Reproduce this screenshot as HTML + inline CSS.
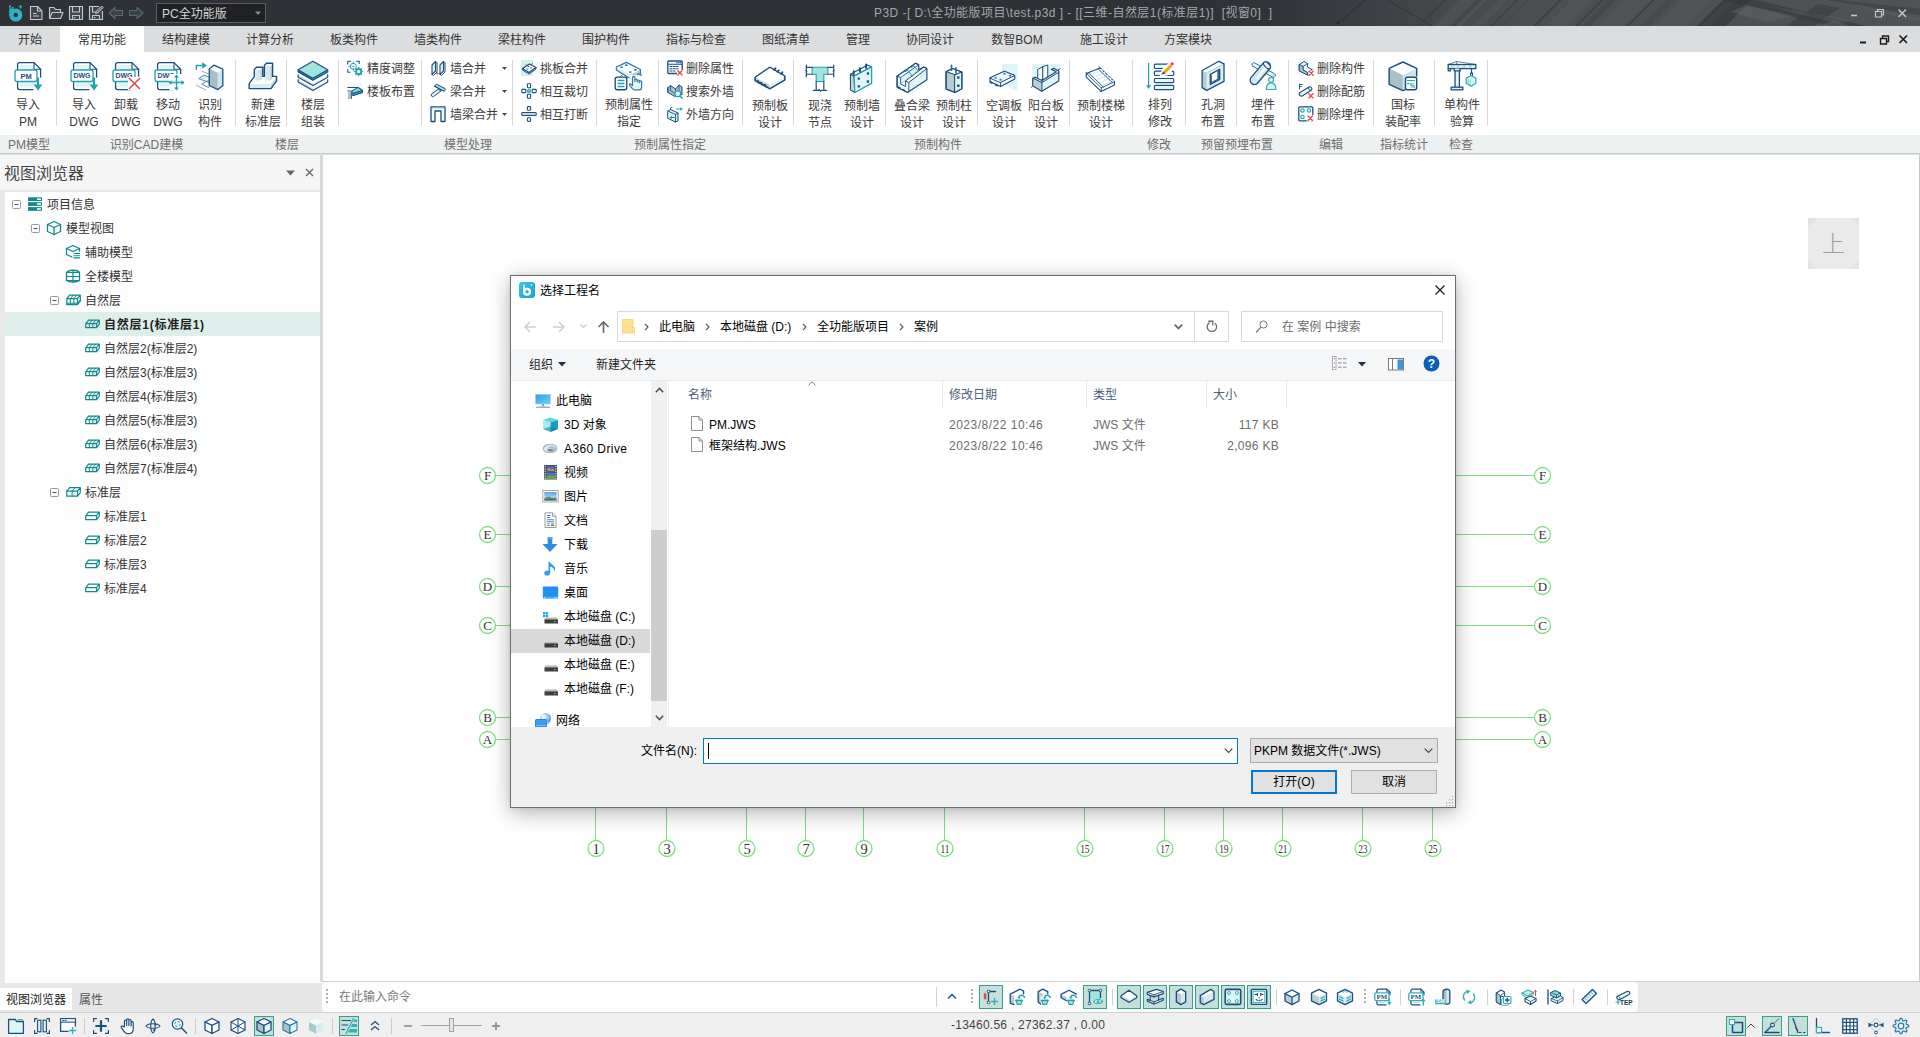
<!DOCTYPE html><html lang="zh"><head><meta charset="utf-8"><title>P3D</title><style>
*{box-sizing:border-box;margin:0;padding:0}
html,body{width:1920px;height:1037px;overflow:hidden;background:#fff}
body{position:relative;font-family:"Liberation Sans","Noto Sans CJK SC",sans-serif;font-size:12px;color:#3b3b3b;line-height:1}
.a{position:absolute}
.t{position:absolute;white-space:nowrap;line-height:16px;height:16px}
.c{text-align:center}
svg{position:absolute;overflow:visible}
.sep{position:absolute;width:1px;background:#d9d9d9}
</style></head><body>
<svg width="0" height="0" style="position:absolute"><defs><linearGradient id="gpc" x1="0" y1="0" x2="1" y2="1"><stop offset="0" stop-color="#2f9cec"/><stop offset="1" stop-color="#6fd0f7"/></linearGradient><linearGradient id="gdrv" x1="0" y1="0" x2="0" y2="1"><stop offset="0" stop-color="#e8e8e8"/><stop offset="1" stop-color="#b8b8b8"/></linearGradient><linearGradient id="gsky" x1="0" y1="0" x2="0" y2="1"><stop offset="0" stop-color="#5aa5e6"/><stop offset="1" stop-color="#d9ecfa"/></linearGradient><radialGradient id="gglobe" cx="0.35" cy="0.35" r="0.8"><stop offset="0" stop-color="#ffffff"/><stop offset="0.5" stop-color="#8cc8f0"/><stop offset="1" stop-color="#2a7fd0"/></radialGradient><linearGradient id="glogo" x1="0" y1="0" x2="1" y2="1"><stop offset="0" stop-color="#35c9e6"/><stop offset="1" stop-color="#1a9fd0"/></linearGradient></defs></svg>
<div class="a" style="left:0px;top:0px;width:1920px;height:26px;background:#2e3237"></div>
<svg style="left:1150px;top:0px;" width="770" height="26" viewBox="0 0 770 26"><defs><linearGradient id="tg" x1="0" x2="1" y1="0" y2="0"><stop offset="0" stop-color="#4a4d50" stop-opacity="0"/><stop offset="0.16" stop-color="#4a4d50" stop-opacity="0.08"/><stop offset="0.34" stop-color="#4a4d50" stop-opacity="0.7"/><stop offset="0.48" stop-color="#4b4e51" stop-opacity="1"/><stop offset="1" stop-color="#505356" stop-opacity="1"/></linearGradient><clipPath id="tc"><rect x="0" y="0" width="770" height="26"/></clipPath></defs><g clip-path="url(#tc)"><rect x="0" y="0" width="770" height="26" fill="url(#tg)"/><path d="M190 22L215 0" stroke="#24272a" stroke-width="0.8" opacity="0.8"/><path d="M237 0L282 26" stroke="#2a2d30" stroke-width="0.8" opacity="0.7"/><circle cx="188" cy="22.5" r="1.5" fill="#24272a"/><path d="M283 26L309 0H337L311 26Z" fill="#626568" opacity="0.28"/><path d="M322 26L348 0H358L332 26Z" fill="#626568" opacity="0.2"/><path d="M395 26L421 0H443L417 26Z" fill="#626568" opacity="0.22"/><path d="M447 26L473 0H499L473 26Z" fill="#626568" opacity="0.2"/><path d="M505 26L531 0H561L535 26Z" fill="#626568" opacity="0.18"/><path d="M268 26L294 0H296L270 26Z" fill="#34373b" opacity="0.5"/><path d="M300 26L326 0H332L306 26Z" fill="#34373b" opacity="0.4"/><path d="M340 26L366 0H369L343 26Z" fill="#34373b" opacity="0.5"/><path d="M352 26L378 0H380L354 26Z" fill="#34373b" opacity="0.35"/><path d="M383 26L409 0H412L386 26Z" fill="#34373b" opacity="0.55"/><path d="M425 26L451 0H454L428 26Z" fill="#34373b" opacity="0.55"/><path d="M432 26L458 0H466L440 26Z" fill="#34373b" opacity="0.3"/><path d="M476 26L502 0H505L479 26Z" fill="#34373b" opacity="0.55"/><path d="M490 26L516 0H526L500 26Z" fill="#34373b" opacity="0.25"/><path d="M547 26L573 0H577L551 26Z" fill="#34373b" opacity="0.55"/><path d="M560 26L586 0H602L576 26Z" fill="#34373b" opacity="0.35"/><path d="M572 0L682 26H716L606 0Z" fill="#34373b" opacity="0.6"/><path d="M548 26L574 0H600L576 26Z" fill="#34373b" opacity="0.55"/><path d="M636 26L668 4L690 8L664 26Z" fill="#34373b" opacity="0.5"/><path d="M690 0L770 9V15L676 0Z" fill="#34373b" opacity="0.5"/><path d="M596 5L644 16L618 22L580 12Z" fill="#626568" opacity="0.45"/><path d="M620 6L700 20L690 24L640 12Z" fill="#626568" opacity="0.35"/><path d="M684 20L700 26H670Z" fill="#626568" opacity="0.4"/><path d="M700 3L770 18V22L720 10Z" fill="#626568" opacity="0.25"/></g></svg>
<svg style="left:6px;top:3px;" width="18" height="20" viewBox="0 0 18 20"><circle cx="9.8" cy="12" r="4.4" fill="none" stroke="#29b4c4" stroke-width="4.3"/><rect x="3.3" y="5.5" width="4" height="7" fill="#29b4c4"/><rect x="3" y="2.5" width="2" height="1.5" fill="#29b4c4"/><rect x="5.5" y="4" width="2" height="1.6" fill="#29b4c4"/><rect x="3.2" y="4.2" width="1.3" height="1.3" fill="#29b4c4"/><path d="M14.5 2v3.4M12.8 3.7h3.4" stroke="#29b4c4" stroke-width="1.1"/></svg>
<svg style="left:28px;top:5px;" width="16" height="16" viewBox="0 0 16 16"><path d="M2.5 1.5H9.5L14 6V14.5H2.5Z" fill="#3b4550" stroke="#c6cacd" stroke-width="1.1" stroke-linejoin="round"/><path d="M9.5 1.5V6H14" fill="none" stroke="#c6cacd" stroke-width="1.1" stroke-linejoin="round"/><path d="M5 8.5h3.5M5 11h6" fill="none" stroke="#c6cacd" stroke-width="1.1" stroke-linejoin="round"/></svg>
<svg style="left:48px;top:5px;" width="16" height="16" viewBox="0 0 16 16"><path d="M1.5 13.5V2.5H6L7.5 4.5H12.5V7.5" fill="#3b4550" stroke="#c6cacd" stroke-width="1.1" stroke-linejoin="round"/><path d="M1.5 13.5L4.2 7.5H15L12.5 13.5Z" fill="#3b4550" stroke="#c6cacd" stroke-width="1.1" stroke-linejoin="round"/></svg>
<svg style="left:68px;top:5px;" width="16" height="16" viewBox="0 0 16 16"><path d="M1.5 1.5H14.5V14.5H1.5Z" fill="#3b4550" stroke="#c6cacd" stroke-width="1.1" stroke-linejoin="round"/><path d="M4.5 1.5V7H11.5V1.5" fill="none" stroke="#c6cacd" stroke-width="1.1" stroke-linejoin="round"/><path d="M4.5 14.5V10.5H11.5V14.5" fill="none" stroke="#c6cacd" stroke-width="1.1" stroke-linejoin="round"/><path d="M6 12.6h1.4" fill="none" stroke="#c6cacd" stroke-width="1.3" stroke-linejoin="round"/></svg>
<svg style="left:88px;top:5px;" width="16" height="16" viewBox="0 0 16 16"><path d="M11 1.5H1.5V14.5H14.5V6" fill="#3b4550" stroke="#c6cacd" stroke-width="1.1" stroke-linejoin="round"/><path d="M4.5 1.5V7H8.5" fill="none" stroke="#c6cacd" stroke-width="1.1" stroke-linejoin="round"/><path d="M4.5 14.5V10.5H11.5V14.5" fill="none" stroke="#c6cacd" stroke-width="1.1" stroke-linejoin="round"/><path d="M6 12.6h1.4" fill="none" stroke="#c6cacd" stroke-width="1.3" stroke-linejoin="round"/><path d="M7.5 8.5L8.3 6.3L13.6 1L15.2 2.6L9.9 7.9Z" fill="#6d757c" stroke="#c6cacd" stroke-width="0.9" stroke-linejoin="round"/></svg>
<svg style="left:108px;top:5px;" width="16" height="16" viewBox="0 0 16 16"><path d="M1 8L7 2.5V5.5H14.5V10.5H7V13.5Z" fill="#394149" stroke="#5f676e" stroke-width="1.1" stroke-linejoin="round"/></svg>
<svg style="left:128px;top:5px;" width="16" height="16" viewBox="0 0 16 16"><path d="M15 8L9 2.5V5.5H1.5V10.5H9V13.5Z" fill="#394149" stroke="#5f676e" stroke-width="1.1" stroke-linejoin="round"/></svg>
<div class="a" style="left:156px;top:3px;width:110px;height:20px;background:#1f2124;border:1px solid #5b5f64"></div>
<div class="t" style="left:162px;top:6px;color:#d4d4d4;font-size:12px">PC全功能版</div>
<svg style="left:254px;top:10px;" width="8" height="6" viewBox="0 0 8 6"><path d="M1 1.5h6l-3 3.5z" fill="#8a8d90"/></svg>
<div class="t" style="left:874px;top:5px;color:#a3a6a9;font-size:12px;letter-spacing:0.45px">P3D -[ D:\全功能版项目\test.p3d ] - [[三维-自然层1(标准层1)]&nbsp; [视窗0]&nbsp; ]</div>
<svg style="left:1846px;top:5px;" width="70" height="16" viewBox="0 0 70 16"><path d="M5 10.5h6" stroke="#c4c6c8" stroke-width="1.6"/><path d="M29.5 6.5h6v5.5h-6z M31.5 6.5v-2h6v5.5h-2" fill="none" stroke="#c4c6c8" stroke-width="1.2"/><path d="M52.5 4.5l7.5 7.5M60 4.5l-7.5 7.5" stroke="#c4c6c8" stroke-width="1.5"/></svg>
<div class="a" style="left:0px;top:26px;width:1920px;height:26px;background:#dcdddf"></div>
<div class="a" style="left:60px;top:26px;width:84px;height:26px;background:#fff"></div>
<div class="t" style="left:-20px;top:32px;width:100px;text-align:center;color:#333">开始</div>
<div class="t" style="left:52px;top:32px;width:100px;text-align:center;color:#333">常用功能</div>
<div class="t" style="left:136px;top:32px;width:100px;text-align:center;color:#333">结构建模</div>
<div class="t" style="left:220px;top:32px;width:100px;text-align:center;color:#333">计算分析</div>
<div class="t" style="left:304px;top:32px;width:100px;text-align:center;color:#333">板类构件</div>
<div class="t" style="left:388px;top:32px;width:100px;text-align:center;color:#333">墙类构件</div>
<div class="t" style="left:472px;top:32px;width:100px;text-align:center;color:#333">梁柱构件</div>
<div class="t" style="left:556px;top:32px;width:100px;text-align:center;color:#333">围护构件</div>
<div class="t" style="left:646px;top:32px;width:100px;text-align:center;color:#333">指标与检查</div>
<div class="t" style="left:736px;top:32px;width:100px;text-align:center;color:#333">图纸清单</div>
<div class="t" style="left:808px;top:32px;width:100px;text-align:center;color:#333">管理</div>
<div class="t" style="left:880px;top:32px;width:100px;text-align:center;color:#333">协同设计</div>
<div class="t" style="left:967px;top:32px;width:100px;text-align:center;color:#333">数智BOM</div>
<div class="t" style="left:1054px;top:32px;width:100px;text-align:center;color:#333">施工设计</div>
<div class="t" style="left:1138px;top:32px;width:100px;text-align:center;color:#333">方案模块</div>
<svg style="left:1854px;top:31px;" width="62" height="16" viewBox="0 0 62 16"><path d="M6 11.5h6" stroke="#1c1c1c" stroke-width="2"/><path d="M26.5 7.500h6v5.5h-6z M28.5 7.5v-2.5h6v5.500h-2" fill="none" stroke="#1c1c1c" stroke-width="1.4"/><path d="M45.5 4.5l7.5 7.500M53 4.500l-7.500 7.500" stroke="#1c1c1c" stroke-width="1.7"/></svg>
<div class="a" style="left:0px;top:52px;width:1920px;height:83px;background:#fff"></div>
<svg style="left:12px;top:60px;" width="32" height="32" viewBox="0 0 32 32"><rect x="8" y="5" width="14" height="22.5" fill="#dff4f5"/><path d="M28.6 17V9.2L22 2.6H7.6a2 2 0 0 0-2 2V27.6a2 2 0 0 0 2 2H21" fill="none" stroke="#1c4f7c" stroke-width="1.3" stroke-linejoin="round" stroke-linecap="round" /><path d="M22 2.6V9.2H28.6" fill="none" stroke="#1c4f7c" stroke-width="1.1" stroke-linejoin="round" stroke-linecap="round" /><rect x="3" y="10" width="22" height="11.5" rx="2" fill="#fff" stroke="#22a2ab" stroke-width="1.3"/><text x="14" y="18.5" text-anchor="middle" font-family="Liberation Sans,sans-serif" font-weight="bold" font-size="7.5" fill="#1c4f7c">PM</text><path d="M26 17.5V26" stroke="#22a2ab" stroke-width="2.2"/><path d="M21.6 24.6H30.4L26 30.6Z" fill="#22a2ab"/></svg>
<div class="t" style="left:-12px;top:97px;width:80px;text-align:center;color:#3b3b3b">导入</div>
<div class="t" style="left:-12px;top:114px;width:80px;text-align:center;color:#3b3b3b">PM</div>
<svg style="left:68px;top:60px;" width="32" height="32" viewBox="0 0 32 32"><rect x="8" y="5" width="14" height="22.5" fill="#dff4f5"/><path d="M28.6 17V9.2L22 2.6H7.6a2 2 0 0 0-2 2V27.6a2 2 0 0 0 2 2H21" fill="none" stroke="#1c4f7c" stroke-width="1.3" stroke-linejoin="round" stroke-linecap="round" /><path d="M22 2.6V9.2H28.6" fill="none" stroke="#1c4f7c" stroke-width="1.1" stroke-linejoin="round" stroke-linecap="round" /><rect x="3" y="10" width="22" height="11.5" rx="2" fill="#fff" stroke="#22a2ab" stroke-width="1.3"/><text x="14" y="18.32" text-anchor="middle" font-family="Liberation Sans,sans-serif" font-weight="bold" font-size="7" fill="#1c4f7c">DWG</text><path d="M26 17.5V26" stroke="#22a2ab" stroke-width="2.2"/><path d="M21.6 24.6H30.4L26 30.6Z" fill="#22a2ab"/></svg>
<div class="t" style="left:44px;top:97px;width:80px;text-align:center;color:#3b3b3b">导入</div>
<div class="t" style="left:44px;top:114px;width:80px;text-align:center;color:#3b3b3b">DWG</div>
<svg style="left:110px;top:60px;" width="32" height="32" viewBox="0 0 32 32"><rect x="8" y="5" width="14" height="22.5" fill="#dff4f5"/><path d="M28.6 16V9.2L22 2.6H7.6a2 2 0 0 0-2 2V27.6a2 2 0 0 0 2 2H21" fill="none" stroke="#1c4f7c" stroke-width="1.3" stroke-linejoin="round" stroke-linecap="round" /><path d="M22 2.6V9.2H28.6" fill="none" stroke="#1c4f7c" stroke-width="1.1" stroke-linejoin="round" stroke-linecap="round" /><rect x="3" y="10" width="22" height="11.5" rx="2" fill="#fff" stroke="#22a2ab" stroke-width="1.3"/><text x="14" y="18.32" text-anchor="middle" font-family="Liberation Sans,sans-serif" font-weight="bold" font-size="7" fill="#1c4f7c">DWG</text><rect x="18" y="17" width="13" height="13" fill="#fff"/><path d="M19.5 18.5l10 10M29.5 18.5l-10 10" stroke="#e8474c" stroke-width="1.6" stroke-linecap="round"/></svg>
<div class="t" style="left:86px;top:97px;width:80px;text-align:center;color:#3b3b3b">卸载</div>
<div class="t" style="left:86px;top:114px;width:80px;text-align:center;color:#3b3b3b">DWG</div>
<svg style="left:152px;top:60px;" width="32" height="32" viewBox="0 0 32 32"><rect x="8" y="5" width="14" height="22.5" fill="#dff4f5"/><path d="M28.6 14V9.2L22 2.6H7.6a2 2 0 0 0-2 2V27.6a2 2 0 0 0 2 2H21" fill="none" stroke="#1c4f7c" stroke-width="1.3" stroke-linejoin="round" stroke-linecap="round" /><path d="M22 2.6V9.2H28.6" fill="none" stroke="#1c4f7c" stroke-width="1.1" stroke-linejoin="round" stroke-linecap="round" /><rect x="3" y="10" width="22" height="11.5" rx="2" fill="#fff" stroke="#22a2ab" stroke-width="1.3"/><text x="14" y="18.32" text-anchor="middle" font-family="Liberation Sans,sans-serif" font-weight="bold" font-size="7" fill="#1c4f7c">DWG</text><rect x="17.5" y="14" width="14" height="16.5" fill="#fff"/><path d="M24.5 15.5v14M17.5 22.5h14" stroke="#22a2ab" stroke-width="1.4"/><path d="M22 17.5l2.5-3 2.5 3zM22 27.5l2.5 3 2.5-3zM19.5 20l-3 2.5 3 2.5zM29.5 20l3 2.5-3 2.5z" fill="#22a2ab"/></svg>
<div class="t" style="left:128px;top:97px;width:80px;text-align:center;color:#3b3b3b">移动</div>
<div class="t" style="left:128px;top:114px;width:80px;text-align:center;color:#3b3b3b">DWG</div>
<svg style="left:194px;top:60px;" width="32" height="32" viewBox="0 0 32 32"><path d="M2.4 9.5V5.45H8" fill="none" stroke="#22a2ab" stroke-width="1.4" stroke-linejoin="round" stroke-linecap="round" /><path d="M8.1 2.2L13 5.45 8.1 8.700Z" fill="#22a2ab"/><path d="M7.600 11.200L14.500 13.900M2.200 25.300L11.800 30" fill="none" stroke="#8fb1cb" stroke-width="1.0" stroke-linejoin="round" stroke-linecap="round" /><path d="M5.100 18.400L9.900 15.100L15.300 17.200V21L12.200 21.300Z" fill="#e3f7f8" stroke="#3d78a3" stroke-width="0.9" stroke-linejoin="round" stroke-linecap="round" /><path d="M8.150 24L12.200 21.300L15.300 22.500V26.500L14.900 27.250Z" fill="#fff" stroke="#3d78a3" stroke-width="0.9" stroke-linejoin="round" stroke-linecap="round" /><path d="M15.300 8.700L19.900 5.200L28.800 9.100L23.800 12.700Z" fill="#fff"/><path d="M15.300 8.700L23.800 12.700V29.600L15.300 25.500Z" fill="#a6bfc4"/><path d="M23.800 12.700L28.800 9.100V25.700L23.800 29.600Z" fill="#c9e6ea"/><path d="M15.300 8.700L19.900 5.200L28.800 9.100V25.700L23.800 29.600L15.300 25.500Z" fill="none" stroke="#1c4f7c" stroke-width="1.3" stroke-linejoin="round" stroke-linecap="round" /></svg>
<div class="t" style="left:170px;top:97px;width:80px;text-align:center;color:#3b3b3b">识别</div>
<div class="t" style="left:170px;top:114px;width:80px;text-align:center;color:#3b3b3b">构件</div>
<svg style="left:247px;top:60px;" width="32" height="32" viewBox="0 0 32 32"><path d="M2.160 24.100H23.960V28.600H2.160Z" fill="#d6ecee"/><path d="M23.960 24.100L29.600 16.600V20.850L23.960 28.600Z" fill="#c3dde1"/><path d="M8.250 10.060H13.200V20.600H8.250Z" fill="#d3eaed"/><path d="M13.200 10.060L14.800 8.500V19L13.200 20.600Z" fill="#b5ced2"/><path d="M18.300 6.100H23.250V20.600H18.300Z" fill="#d3eaed"/><path d="M23.250 6.100L24.900 4.500V19L23.250 20.600Z" fill="#b5ced2"/><path d="M2.160 28.600V23.660L7.300 16.600V9.600L9.400 7.250H15.750V16.400H17.400V5.400L19.500 3.270H25.600V16.400H29.600V20.850L23.960 28.600Z" fill="none" stroke="#1c4f7c" stroke-width="1.4" stroke-linejoin="round" stroke-linecap="round" /></svg>
<div class="t" style="left:223px;top:97px;width:80px;text-align:center;color:#3b3b3b">新建</div>
<div class="t" style="left:223px;top:114px;width:80px;text-align:center;color:#3b3b3b">标准层</div>
<svg style="left:297px;top:60px;" width="32" height="32" viewBox="0 0 32 32"><path d="M1.150 19.7L15.900 28.1V30.5L1.150 22.099999999999998Z" fill="#cfe0e3"/><path d="M30.700 19.7L15.900 28.1V30.5L30.700 22.099999999999998Z" fill="#f4fbfb"/><path d="M1.150 19.7L15.900 11.2L30.700 19.7L15.900 28.1Z" fill="#fff"/><path d="M1.150 19.7V22.099999999999998L15.900 30.5L30.700 22.099999999999998V19.7" fill="none" stroke="#1c4f7c" stroke-width="1.2" stroke-linejoin="round" stroke-linecap="round" /><path d="M1.150 14.75L15.900 23.15V25.549999999999997L1.150 17.15Z" fill="#cfe0e3"/><path d="M30.700 14.75L15.900 23.15V25.549999999999997L30.700 17.15Z" fill="#f4fbfb"/><path d="M1.150 14.75L15.900 6.25L30.700 14.75L15.900 23.15Z" fill="#fff"/><path d="M1.150 14.75V17.15L15.900 25.549999999999997L30.700 17.15V14.75" fill="none" stroke="#1c4f7c" stroke-width="1.2" stroke-linejoin="round" stroke-linecap="round" /><path d="M1.150 9.83L15.900 18.23V20.330000000000002L1.150 11.93Z" fill="#2f75a8"/><path d="M30.700 9.83L15.900 18.23V20.330000000000002L30.700 11.93Z" fill="#2aa9b5"/><path d="M1.150 9.83L15.900 1.33L30.700 9.83L15.900 18.23Z" fill="#a3e3df" stroke="#1c4f7c" stroke-width="1.1" stroke-linejoin="round" stroke-linecap="round" /><path d="M1.150 9.83V11.93L15.900 20.330000000000002L30.700 11.93V9.83" fill="none" stroke="#1c4f7c" stroke-width="1.2" stroke-linejoin="round" stroke-linecap="round" /></svg>
<div class="t" style="left:273px;top:97px;width:80px;text-align:center;color:#3b3b3b">楼层</div>
<div class="t" style="left:273px;top:114px;width:80px;text-align:center;color:#3b3b3b">组装</div>
<svg style="left:613px;top:60px;" width="32" height="32" viewBox="0 0 32 32"><path d="M3.350 7L17.600 14.500L16.100 18L3.350 10.100Z" fill="#d9eef0"/><path d="M17.600 14.500L27.450 9.500V13L22 15.800Z" fill="#b7cdd0"/><path d="M3.350 7L13.400 2.370L27.450 9.500L17.600 14.500Z" fill="#fff"/><path d="M16.100 18L3.350 10.100V7L13.400 2.370L27.450 9.500V13.500" fill="none" stroke="#2f75a8" stroke-width="1.2" stroke-linejoin="round" stroke-linecap="round" /><ellipse cx="8.55" cy="7.2" rx="1.400" ry="0.850" fill="#2f75a8"/><ellipse cx="13.4" cy="5.2" rx="1.400" ry="0.850" fill="#2f75a8"/><ellipse cx="17.4" cy="12" rx="1.400" ry="0.850" fill="#2f75a8"/><ellipse cx="22.4" cy="9.9" rx="1.400" ry="0.850" fill="#2f75a8"/><path d="M24.500 14.800l1.500-1.200 1.200 1.600 1.200-.400" fill="none" stroke="#2f75a8" stroke-width="1.3" stroke-linejoin="round" stroke-linecap="round" /><path d="M9.100 14.900L7.200 17" fill="none" stroke="#2f75a8" stroke-width="1.0" stroke-linejoin="round" stroke-linecap="round" /><rect x="2.200" y="17.100" width="11.560" height="12.660" rx="2.200" fill="#fff" stroke="#0f4c75" stroke-width="1.300"/><path d="M5.100 20.500H10.900M5.100 23.500H10.900M5.100 26.500H10.900" fill="none" stroke="#22a2ab" stroke-width="1.3" stroke-linejoin="round" stroke-linecap="round" /><path d="M19.500 25.500V17.500a1.200 1.200 0 0 1 2.400 0V21.500 20.300a1.150 1.150 0 0 1 2.300 0V22 21.100a1.100 1.100 0 0 1 2.200 0V22.600 22a1.100 1.100 0 0 1 2.200 0V27.500c0 1.400-.9 2.300-2.200 2.300H21.500c-1 0-1.600-.5-2.300-1.400L16.700 25.300c-.7-1 .5-2 1.500-1.200Z" fill="#e3f7f8" stroke="#2f75a8" stroke-width="1.2" stroke-linejoin="round" stroke-linecap="round" /></svg>
<div class="t" style="left:589px;top:97px;width:80px;text-align:center;color:#3b3b3b">预制属性</div>
<div class="t" style="left:589px;top:114px;width:80px;text-align:center;color:#3b3b3b">指定</div>
<svg style="left:754px;top:61px;" width="32" height="32" viewBox="0 0 32 32"><path d="M1.150 16.150L15.900 23.800V27.800L1.150 19.800Z" fill="#bfd3d6"/><path d="M30.800 15.050L15.900 23.800V27.800L30.800 19.060Z" fill="#e3f2f4"/><path d="M1.150 16.150L15.900 6.300L30.800 15.050V19.060L15.900 27.800L1.150 19.800Z" fill="none" stroke="#1c4f7c" stroke-width="1.2" stroke-linejoin="round" stroke-linecap="round" /><path d="M1.150 16.150L15.900 6.300L30.800 15.050L15.900 23.800Z" fill="#fff"/><path d="M1.150 16.150L15.900 6.300L30.800 15.050V19.060L15.900 27.800L1.150 19.800Z" fill="none" stroke="#1c4f7c" stroke-width="1.2" stroke-linejoin="round" stroke-linecap="round" /><path d="M20.300 8.900l1.200-1.600M23.600 10.800l1.200-1.600M27.200 12.900l1.200-1.600" fill="none" stroke="#1c4f7c" stroke-width="1.9" stroke-linejoin="round" stroke-linecap="round" /><path d="M3.600 19.900l1.400 2M7 21.700l1.400 2M10.900 23.700l1.400 2" fill="none" stroke="#1c4f7c" stroke-width="2.0" stroke-linejoin="round" stroke-linecap="round" /></svg>
<div class="t" style="left:730px;top:98px;width:80px;text-align:center;color:#3b3b3b">预制板</div>
<div class="t" style="left:730px;top:115px;width:80px;text-align:center;color:#3b3b3b">设计</div>
<svg style="left:804px;top:61px;" width="32" height="32" viewBox="0 0 32 32"><path d="M8.170 6.300H23.850V13.230H19.830V20.500H12.180V13.230H8.170Z" fill="#a3e3df" stroke="#22a2ab" stroke-width="1.1"/><path d="M2.330 6.300H8.170M2.330 13.230H8.170M23.850 6.300H29.700M23.850 13.230H29.700M2.330 4.100V15.800M29.700 4.100V15.800" fill="none" stroke="#1c4f7c" stroke-width="1.2" stroke-linejoin="round" stroke-linecap="round" /><path d="M2.330 8.800l-.9 .700 1.800 1-.9.700M29.700 8.600l.9.700-1.800 1 .9.700" fill="none" stroke="#1c4f7c" stroke-width="0.9" stroke-linejoin="round" stroke-linecap="round" /><path d="M12.180 20.500V29.300M19.830 20.500V29.300M9.260 29.300H14.500l.8-.800 1 1.800.8-1H22.750" fill="none" stroke="#1c4f7c" stroke-width="1.2" stroke-linejoin="round" stroke-linecap="round" /></svg>
<div class="t" style="left:780px;top:98px;width:80px;text-align:center;color:#3b3b3b">现浇</div>
<div class="t" style="left:780px;top:115px;width:80px;text-align:center;color:#3b3b3b">节点</div>
<svg style="left:846px;top:61px;" width="32" height="32" viewBox="0 0 32 32"><path d="M4.450 13.200L8.100 15.050L8.800 31.460L4.450 28.900Z" fill="#c9d7da" stroke="#1c4f7c" stroke-width="1.1" stroke-linejoin="round" stroke-linecap="round" /><path d="M4.450 13.200L21.600 4.100L25.600 5.940L8.100 15.050Z" fill="#fff" stroke="#1c4f7c" stroke-width="1.1" stroke-linejoin="round" stroke-linecap="round" /><path d="M8.100 15.050L25.600 5.940V22.350L8.800 31.460Z" fill="#e1f6f8" stroke="#22a2ab" stroke-width="1.3" stroke-linejoin="round" stroke-linecap="round" /><path d="M7.700 13.400V10.200M13.900 10.600V7.200M20.100 7.100V3.400" fill="none" stroke="#1c4f7c" stroke-width="1.9" stroke-linejoin="round" stroke-linecap="round" /><rect x="11.65" y="16.450000000000003" width="2.300" height="2.300" rx="0.400" fill="#1c4f7c"/><rect x="20.8" y="11.35" width="2.300" height="2.300" rx="0.400" fill="#1c4f7c"/><rect x="11.65" y="24.150000000000002" width="2.300" height="2.300" rx="0.400" fill="#1c4f7c"/><rect x="20.8" y="19.35" width="2.300" height="2.300" rx="0.400" fill="#1c4f7c"/></svg>
<div class="t" style="left:822px;top:98px;width:80px;text-align:center;color:#3b3b3b">预制墙</div>
<div class="t" style="left:822px;top:115px;width:80px;text-align:center;color:#3b3b3b">设计</div>
<svg style="left:896px;top:61px;" width="32" height="32" viewBox="0 0 32 32"><path d="M1.25 15L19.6 2.25L22.75 3.75V8.75L27.75 6L30.9 7.5V18.75L11.5 31.5L1.25 26.25Z" fill="#dff4f5" stroke="none" stroke-width="0" stroke-linejoin="round" stroke-linecap="round" /><path d="M1.25 15L19.6 2.25L22.75 3.75L4.6 16.5Z" fill="#fff" stroke="#1c4f7c" stroke-width="0.9" stroke-linejoin="round" stroke-linecap="round" /><path d="M9.6 20L27.75 6L30.9 7.5L12.75 21.5Z" fill="#fff" stroke="#1c4f7c" stroke-width="1.0" stroke-linejoin="round" stroke-linecap="round" /><path d="M1.25 15L4.6 16.5V23L9.6 25.6V20L12.75 21.5V31L11.5 31.5L1.25 26.25Z" fill="#f3fafa" stroke="#1c4f7c" stroke-width="0.9" stroke-linejoin="round" stroke-linecap="round" /><path d="M4.6 23L22.75 8.75" fill="none" stroke="#9cc7d6" stroke-width="0.8" stroke-linejoin="round" stroke-linecap="round" /><path d="M9 10.6L12 9.4L16.3 15.2M15.2 6.4L18.2 5.2L22.6 11" fill="none" stroke="#22a2ab" stroke-width="1.0" stroke-linejoin="round" stroke-linecap="round" /><path d="M2.5 26.2l1.5.8M7 28.600l1.500.800" fill="none" stroke="#1c4f7c" stroke-width="1.6" stroke-linejoin="round" stroke-linecap="round" /><path d="M1.25 15L19.6 2.25L22.75 3.75V8.75L27.75 6L30.9 7.5V18.75L11.5 31.5L1.25 26.25Z" fill="none" stroke="#1c4f7c" stroke-width="1.2" stroke-linejoin="round" stroke-linecap="round" /></svg>
<div class="t" style="left:872px;top:98px;width:80px;text-align:center;color:#3b3b3b">叠合梁</div>
<div class="t" style="left:872px;top:115px;width:80px;text-align:center;color:#3b3b3b">设计</div>
<svg style="left:938px;top:61px;" width="32" height="32" viewBox="0 0 32 32"><path d="M8.25 10.6L14.5 7.5L23.9 11L17 13.75Z" fill="#fff" stroke="#1c4f7c" stroke-width="1.0" stroke-linejoin="round" stroke-linecap="round" /><path d="M8.25 10.6L17 13.75V31.5L8.25 28.1Z" fill="#b7cccf" stroke="#1c4f7c" stroke-width="1.0" stroke-linejoin="round" stroke-linecap="round" /><path d="M17 13.75L23.9 11V27.75L17 31.5Z" fill="#dff4f5" stroke="#1c4f7c" stroke-width="1.0" stroke-linejoin="round" stroke-linecap="round" /><path d="M8.25 10.6L14.5 7.5L23.9 11V27.75L17 31.5L8.25 28.1Z" fill="none" stroke="#1c4f7c" stroke-width="1.2" stroke-linejoin="round" stroke-linecap="round" /><path d="M13.5 4.4V9.2M17.9 6.9V11.9" fill="none" stroke="#2a69a3" stroke-width="1.7" stroke-linejoin="round" stroke-linecap="round" /><rect x="19.1" y="15.3" width="2.4" height="2.4" fill="#1c4f7c"/><rect x="19.1" y="23.55" width="2.4" height="2.4" fill="#1c4f7c"/></svg>
<div class="t" style="left:914px;top:98px;width:80px;text-align:center;color:#3b3b3b">预制柱</div>
<div class="t" style="left:914px;top:115px;width:80px;text-align:center;color:#3b3b3b">设计</div>
<svg style="left:988px;top:61px;" width="32" height="32" viewBox="0 0 32 32"><path d="M13.9 3.1H29.75V30.6L13.9 22.5Z" fill="#dff4f5"/><path d="M2 16.9L16.4 10.25L26.75 14.4V18.1L12.6 25.6L2 20.6Z" fill="#fff" stroke="#1c4f7c" stroke-width="1.1" stroke-linejoin="round" stroke-linecap="round" /><path d="M2 16.9L16.4 10.25L26.75 14.4L12.6 21.5Z" fill="#eef9fa" stroke="#1c4f7c" stroke-width="1.0" stroke-linejoin="round" stroke-linecap="round" /><path d="M12.6 21.5V25.6" fill="none" stroke="#1c4f7c" stroke-width="1.0" stroke-linejoin="round" stroke-linecap="round" /><ellipse cx="7.6" cy="16.9" rx="1.3" ry="0.9" fill="#3f7fb0"/><ellipse cx="16.4" cy="12.75" rx="1.3" ry="0.9" fill="#3f7fb0"/><ellipse cx="12.6" cy="18.75" rx="1.3" ry="0.9" fill="#3f7fb0"/><ellipse cx="22" cy="14.75" rx="1.3" ry="0.9" fill="#3f7fb0"/><path d="M2.3 21.200l1.500.700M7.500 23.600l1.800.900" fill="none" stroke="#1c4f7c" stroke-width="1.8" stroke-linejoin="round" stroke-linecap="round" /></svg>
<div class="t" style="left:964px;top:98px;width:80px;text-align:center;color:#3b3b3b">空调板</div>
<div class="t" style="left:964px;top:115px;width:80px;text-align:center;color:#3b3b3b">设计</div>
<svg style="left:1030px;top:61px;" width="32" height="32" viewBox="0 0 32 32"><path d="M2.1 3.1H29.75V13L12 23L2.1 18.500Z" fill="#dff4f5"/><path d="M8.1 8.3L13.1 5.500V19L8.100 19Z" fill="#fff" stroke="#1c4f7c" stroke-width="1.0" stroke-linejoin="round" stroke-linecap="round" /><path d="M13.1 5.500L17.750 4V17L13.100 19Z" fill="#fff" stroke="#1c4f7c" stroke-width="1.0" stroke-linejoin="round" stroke-linecap="round" /><path d="M3.1 17.25L5.2 16.2L12 19.5L26.2 10.8L21.6 8.400L23.800 7.300L28.750 10V20L11.9 30.25L3.1 25Z" fill="#dff4f5" stroke="#1c4f7c" stroke-width="1.2" stroke-linejoin="round" stroke-linecap="round" /><path d="M3.1 17.25L11.9 21.5V30.25L3.1 25Z" fill="#b9cfd3" stroke="#1c4f7c" stroke-width="1.0" stroke-linejoin="round" stroke-linecap="round" /><path d="M11.9 21.5L28.75 11.25M12 19.500V21.400" fill="none" stroke="#1c4f7c" stroke-width="1.0" stroke-linejoin="round" stroke-linecap="round" /><path d="M27.500 9.300L30.300 7.600M2.300 25.600L1.200 26.400" fill="none" stroke="#1c4f7c" stroke-width="0.9" stroke-linejoin="round" stroke-linecap="round" /></svg>
<div class="t" style="left:1006px;top:98px;width:80px;text-align:center;color:#3b3b3b">阳台板</div>
<div class="t" style="left:1006px;top:115px;width:80px;text-align:center;color:#3b3b3b">设计</div>
<svg style="left:1085px;top:61px;" width="32" height="32" viewBox="0 0 32 32"><path d="M1.25 12.5L15 6.9L29.4 20.7V24L16.25 30.6L1.25 16.2Z" fill="#fff" stroke="#1c4f7c" stroke-width="1.1" stroke-linejoin="round" stroke-linecap="round" /><path d="M3.6 13.0L16.6 7.9L18.2 9.5L5.2 14.6Z" fill="#e3f1f3" stroke="none" stroke-width="0" stroke-linejoin="round" stroke-linecap="round" /><path d="M6.5 15.75L19.5 10.65L21.099999999999998 12.25L8.1 17.35Z" fill="#e3f1f3" stroke="none" stroke-width="0" stroke-linejoin="round" stroke-linecap="round" /><path d="M9.4 18.5L22.400000000000002 13.4L24.0 15.0L11.0 20.1Z" fill="#e3f1f3" stroke="none" stroke-width="0" stroke-linejoin="round" stroke-linecap="round" /><path d="M12.299999999999999 21.25L25.3 16.15L26.9 17.75L13.899999999999999 22.85Z" fill="#e3f1f3" stroke="none" stroke-width="0" stroke-linejoin="round" stroke-linecap="round" /><path d="M15.2 24.0L28.200000000000003 18.9L29.799999999999997 20.5L16.8 25.6Z" fill="#e3f1f3" stroke="none" stroke-width="0" stroke-linejoin="round" stroke-linecap="round" /><path d="M1.25 12.5L16.25 26.900V30.600M16.25 26.900L29.400 20.700M3.300 11.700L18.300 26M13 7.700L27.400 21.600" fill="none" stroke="#1c4f7c" stroke-width="0.9" stroke-linejoin="round" stroke-linecap="round" /><path d="M1 11.300l1.800 1.800M14 5.700l1.800 1.800" fill="none" stroke="#1c4f7c" stroke-width="0.9" stroke-linejoin="round" stroke-linecap="round" /></svg>
<div class="t" style="left:1061px;top:98px;width:80px;text-align:center;color:#3b3b3b">预制楼梯</div>
<div class="t" style="left:1061px;top:115px;width:80px;text-align:center;color:#3b3b3b">设计</div>
<svg style="left:1144px;top:60px;" width="32" height="32" viewBox="0 0 32 32"><path d="M4.600 3V25.700" stroke="#22a2ab" stroke-width="1.200"/><path d="M2.100 25.200H7.100L4.600 28.900Z" fill="#22a2ab"/><rect x="10.300" y="4.2" width="19.45" height="4.3" rx="1.300" fill="#e3f8f9" stroke="#1c4f7c" stroke-width="1.200"/><rect x="10.300" y="11.2" width="19.45" height="4.300000000000001" rx="1.300" fill="#e3f8f9" stroke="#1c4f7c" stroke-width="1.200"/><rect x="10.300" y="18.5" width="19.45" height="4.100000000000001" rx="1.300" fill="#e3f8f9" stroke="#1c4f7c" stroke-width="1.200"/><rect x="10.300" y="25.3" width="19.45" height="4.300000000000001" rx="1.300" fill="#e3f8f9" stroke="#1c4f7c" stroke-width="1.200"/><path d="M15.300 16.800L18 9.500L25.500 2L31 2L31 8L23.500 15.500Z" fill="#fff"/><path d="M19.400 11.200L26.500 4.200L28.400 6.150L21.400 13.600Z" fill="#f5a30a"/><path d="M20.300 10.300L27.400 3.300" stroke="#fbc65c" stroke-width="0.800"/><path d="M19.400 11.200L21.400 13.600L17.100 14.750Z" fill="#6b3f2a"/><circle cx="28.200" cy="3.700" r="1.500" fill="#ee3b4a"/></svg>
<div class="t" style="left:1120px;top:97px;width:80px;text-align:center;color:#3b3b3b">排列</div>
<div class="t" style="left:1120px;top:114px;width:80px;text-align:center;color:#3b3b3b">修改</div>
<svg style="left:1197px;top:60px;" width="32" height="32" viewBox="0 0 32 32"><path d="M5.100 10.450L9.800 12.800V30.400L5.100 27.600Z" fill="#b5cbd0"/><path d="M5.100 10.450L21.900 1.300L27 3.800L9.800 12.800Z" fill="#fff"/><path d="M9.800 12.800L27 3.800V21.400L9.800 30.400Z" fill="#d8edf0"/><path d="M9.800 12.800L27 3.800" fill="none" stroke="#9cc7d6" stroke-width="0.8" stroke-linejoin="round" stroke-linecap="round" /><path d="M13.300 14.350L22.700 9.300V19.400L13.300 24.500Z" fill="#fff"/><path d="M20.300 10.600L22.700 9.300V19.400L20.300 20.700Z" fill="#2a69a3"/><path d="M14.250 22.600L20.300 19.400V20.700L13.300 24.500Z" fill="#cfe9ec"/><path d="M13.300 14.350L22.700 9.300V19.400L13.300 24.500Z" fill="none" stroke="#1c4f7c" stroke-width="1.3" stroke-linejoin="round" stroke-linecap="round" /><path d="M14.250 15.200V22.600L20.300 19.400" fill="none" stroke="#1c4f7c" stroke-width="1.0" stroke-linejoin="round" stroke-linecap="round" /><path d="M5.100 10.450L21.900 1.300L27 3.800V21.400L9.800 30.400L5.100 27.600Z" fill="none" stroke="#1c4f7c" stroke-width="1.3" stroke-linejoin="round" stroke-linecap="round" /></svg>
<div class="t" style="left:1173px;top:97px;width:80px;text-align:center;color:#3b3b3b">孔洞</div>
<div class="t" style="left:1173px;top:114px;width:80px;text-align:center;color:#3b3b3b">布置</div>
<svg style="left:1247px;top:60px;" width="32" height="32" viewBox="0 0 32 32"><path d="M5.89 6.27L25.69 17.07A1.9 1.9 0 0 0 27.51 13.73L7.71 2.93A1.9 1.9 0 0 0 5.89 6.27Z" fill="#e9f5f7" stroke="#2f75a8" stroke-width="1.0" stroke-linejoin="round" stroke-linecap="round" /><ellipse cx="27" cy="15.600" rx="1.300" ry="1.800" fill="#b9c9cc" transform="rotate(-28 27 15.600)"/><path d="M15.91 3.43L4.11 17.43A4.3 4.3 0 0 0 10.69 22.97L22.49 8.97A4.3 4.3 0 0 0 15.91 3.43Z" fill="#d2e9ec" stroke="#1c4f7c" stroke-width="1.3" stroke-linejoin="round" stroke-linecap="round" /><path d="M10 18L20.500 5.500" fill="none" stroke="#f2fbfc" stroke-width="2.2" stroke-linejoin="round" stroke-linecap="round" /><path d="M17.200 3L22.300 8.200" fill="none" stroke="#1c4f7c" stroke-width="0.0" stroke-linejoin="round" stroke-linecap="round" /><ellipse cx="20" cy="5.300" rx="4.300" ry="2.200" fill="#fff" stroke="#1c4f7c" stroke-width="1.100" transform="rotate(45 20 5.300)"/><circle cx="24.100" cy="19.800" r="2.500" fill="#dff5f5" stroke="#35a9b3" stroke-width="1.200"/><path d="M19.300 29.500C19.300 25 21 22.800 24.100 22.800S28.900 25 28.900 29.500Z" fill="#dff5f5" stroke="#35a9b3" stroke-width="1.2" stroke-linejoin="round" stroke-linecap="round" /></svg>
<div class="t" style="left:1223px;top:97px;width:80px;text-align:center;color:#3b3b3b">埋件</div>
<div class="t" style="left:1223px;top:114px;width:80px;text-align:center;color:#3b3b3b">布置</div>
<svg style="left:1387px;top:60px;" width="32" height="32" viewBox="0 0 32 32"><path d="M2.170 8.300L15.900 2L29.700 8.300L15.900 15.200Z" fill="#fff"/><path d="M2.170 8.300L15.900 15.200V30.700L2.170 24.400Z" fill="#a9c0c5"/><path d="M15.900 15.200L29.700 8.300V24.400L15.900 30.700Z" fill="#c9e6ea"/><path d="M29.700 16V8.300L15.900 2L2.170 8.300V24.400L15.900 30.700L18 29.800" fill="none" stroke="#1c4f7c" stroke-width="1.4" stroke-linejoin="round" stroke-linecap="round" /><rect x="18.500" y="17.200" width="11.200" height="12.600" rx="2" fill="#fff" stroke="#1c4f7c" stroke-width="1.400"/><path d="M20.500 20.500H27.500" fill="none" stroke="#22a2ab" stroke-width="1.1" stroke-linejoin="round" stroke-linecap="round" /><path d="M20.500 23.600H21.800" fill="none" stroke="#22a2ab" stroke-width="1.1" stroke-linejoin="round" stroke-linecap="round" /><text x="25.300" y="28" text-anchor="middle" font-family="Liberation Sans,sans-serif" font-weight="bold" font-size="6.500" fill="#22a2ab">%</text></svg>
<div class="t" style="left:1363px;top:97px;width:80px;text-align:center;color:#3b3b3b">国标</div>
<div class="t" style="left:1363px;top:114px;width:80px;text-align:center;color:#3b3b3b">装配率</div>
<svg style="left:1446px;top:60px;" width="32" height="32" viewBox="0 0 32 32"><path d="M2.200 4.500L10.800 1.500L29.800 4.500M10.800 1.500V4.500" fill="none" stroke="#3d78a3" stroke-width="0.9" stroke-linejoin="round" stroke-linecap="round" /><rect x="2.200" y="4.500" width="27.600" height="4.100" fill="#e3f6f7" stroke="#1c4f7c" stroke-width="1.300"/><path d="M4 5.200l2.300 2.800 2.300-2.800ZM10 5.200l2.300 2.800 2.300-2.800ZM16 5.200l2.300 2.800 2.300-2.800ZM22 5.200l2.300 2.800 2.300-2.800Z" fill="#b5cfd3"/><path d="M2.200 8.600V10.800H4.500V9.500" fill="none" stroke="#1c4f7c" stroke-width="1.2" stroke-linejoin="round" stroke-linecap="round" /><rect x="9.070" y="8.600" width="4.330" height="18.600" fill="#e3f6f7"/><path d="M9.070 10.900V27.200M13.400 10.900V27.200M8.200 8.900V10.900H14.200V8.900" fill="none" stroke="#1c4f7c" stroke-width="1.3" stroke-linejoin="round" stroke-linecap="round" /><rect x="5.200" y="27.200" width="11.600" height="2.600" fill="#e3f6f7" stroke="#1c4f7c" stroke-width="1.300"/><path d="M25.500 8.600V13.200" fill="none" stroke="#1c4f7c" stroke-width="1.2" stroke-linejoin="round" stroke-linecap="round" /><rect x="24.500" y="13.200" width="2" height="2.300" fill="#fff" stroke="#1c4f7c" stroke-width="1"/><path d="M25.100 15.500L29.800 18.060V23.500L25.100 26.100L20.250 23.500V18.060Z" fill="#dff7f6"/><path d="M20.250 18.060L25.100 20.600V26.100L20.250 23.500Z" fill="#a8e6e2"/><path d="M25.100 15.500L29.800 18.060V23.500L25.100 26.100L20.250 23.500V18.060Z" fill="none" stroke="#35b0b8" stroke-width="1.3" stroke-linejoin="round" stroke-linecap="round" /></svg>
<div class="t" style="left:1422px;top:97px;width:80px;text-align:center;color:#3b3b3b">单构件</div>
<div class="t" style="left:1422px;top:114px;width:80px;text-align:center;color:#3b3b3b">验算</div>
<div class="sep" style="left:56px;top:60px;height:66px"></div>
<div class="sep" style="left:235px;top:60px;height:66px"></div>
<div class="sep" style="left:286px;top:60px;height:66px"></div>
<div class="sep" style="left:338px;top:60px;height:66px"></div>
<div class="sep" style="left:421px;top:60px;height:66px"></div>
<div class="sep" style="left:512px;top:60px;height:66px"></div>
<div class="sep" style="left:596px;top:60px;height:66px"></div>
<div class="sep" style="left:658px;top:60px;height:66px"></div>
<div class="sep" style="left:742px;top:60px;height:66px"></div>
<div class="sep" style="left:793px;top:60px;height:66px"></div>
<div class="sep" style="left:885px;top:60px;height:66px"></div>
<div class="sep" style="left:977px;top:60px;height:66px"></div>
<div class="sep" style="left:1069px;top:60px;height:66px"></div>
<div class="sep" style="left:1132px;top:60px;height:66px"></div>
<div class="sep" style="left:1185px;top:60px;height:66px"></div>
<div class="sep" style="left:1236px;top:60px;height:66px"></div>
<div class="sep" style="left:1288px;top:60px;height:66px"></div>
<div class="sep" style="left:1373px;top:60px;height:66px"></div>
<div class="sep" style="left:1434px;top:60px;height:66px"></div>
<div class="sep" style="left:1487px;top:60px;height:66px"></div>
<svg style="left:347px;top:60px;" width="16" height="16" viewBox="0 0 16 16"><path d="M0.8 4V1.2H3.5M9.5 1.2H12.2V3.5M0.8 9.5V12.2H3" fill="none" stroke="#1c4f7c" stroke-width="1.1" stroke-linejoin="round" stroke-linecap="round" /><circle cx="6.3" cy="6.3" r="3" fill="#fff" stroke="#22a2ab" stroke-width="1"/><circle cx="6.3" cy="6.3" r="0.9" fill="#22a2ab"/><path d="M6.3 1.8v2M6.3 8.8v2M1.8 6.3h2" fill="none" stroke="#22a2ab" stroke-width="0.9" stroke-linejoin="round" stroke-linecap="round" /><circle cx="11.6" cy="11.6" r="2.6" fill="#fff" stroke="#22a2ab" stroke-width="1.8"/><path d="M11.6 7.6v1M11.6 14.6v1M7.6 11.6h1M14.6 11.6h1M8.8 8.8l.8.8M13.6 13.6l.8.8M8.8 14.4l.8-.8M13.6 9.6l.8-.8" fill="none" stroke="#22a2ab" stroke-width="1.4" stroke-linejoin="round" stroke-linecap="round" /></svg>
<div class="t" style="left:367px;top:61px;color:#3b3b3b">精度调整</div>
<svg style="left:347px;top:83px;" width="16" height="16" viewBox="0 0 16 16"><path d="M1 1l2 2M4 1l2 2M7 1l2 2M10 1l2 2M13 1l2 2" fill="none" stroke="#bfe3e6" stroke-width="0.8" stroke-linejoin="round" stroke-linecap="round" /><path d="M0.8 4.5H11L15.5 7.5V9.5L6 12.5" fill="none" stroke="#1c4f7c" stroke-width="1.2" stroke-linejoin="round" stroke-linecap="round" /><path d="M5.5 7.5L11 4.5L15.5 7.5L6 10.5Z" fill="#7fd0d0" stroke="#1c4f7c" stroke-width="0.9" stroke-linejoin="round" stroke-linecap="round" /><path d="M0.8 8h3.5V15.5M2 8.5V15.5" fill="none" stroke="#1c4f7c" stroke-width="1.1" stroke-linejoin="round" stroke-linecap="round" /><rect x="1" y="8" width="3" height="7.5" fill="#a9c3c8"/><path d="M6 10.5L15.5 7.5V9.5L6 12.5Z" fill="#2b9fa8" stroke="#1c4f7c" stroke-width="0.8" stroke-linejoin="round" stroke-linecap="round" /></svg>
<div class="t" style="left:367px;top:84px;color:#3b3b3b">楼板布置</div>
<svg style="left:430px;top:60px;" width="16" height="16" viewBox="0 0 16 16"><path d="M2 5L5.5 1.5V11L2 14.5Z" fill="#dff4f5" stroke="#1c4f7c" stroke-width="1.1" stroke-linejoin="round" stroke-linecap="round" /><path d="M5.5 1.5L7 2.5V12L3.5 15.5L2 14.5" fill="none" stroke="#1c4f7c" stroke-width="1.0" stroke-linejoin="round" stroke-linecap="round" /><path d="M10 5L13.5 1.5V11L10 14.5Z" fill="#dff4f5" stroke="#1c4f7c" stroke-width="1.1" stroke-linejoin="round" stroke-linecap="round" /><path d="M13.5 1.5L15 2.5V12L11.5 15.5L10 14.5" fill="none" stroke="#1c4f7c" stroke-width="1.0" stroke-linejoin="round" stroke-linecap="round" /><path d="M6.2 13.5h3M6.2 13.5l1.2-1M6.2 13.5l1.2 1" fill="none" stroke="#e8474c" stroke-width="0.8" stroke-linejoin="round" stroke-linecap="round" /></svg>
<div class="t" style="left:450px;top:61px;color:#3b3b3b">墙合并</div>
<svg style="left:501.5px;top:66.5px;" width="5" height="3" viewBox="0 0 5 3"><path d="M0 0h5l-2.5 3z" fill="#4a4a4a"/></svg>
<svg style="left:430px;top:83px;" width="16" height="16" viewBox="0 0 16 16"><path d="M4.5 3L6.5 1.2L15 5.5a1.5 1.5 0 0 1-1.5 2.5Z" fill="#9fdedd" stroke="#1c4f7c" stroke-width="1.0" stroke-linejoin="round" stroke-linecap="round" /><path d="M8.5 6.5L11 8L3.5 13.5a1.6 1.6 0 0 1-2-2.4Z" fill="#dff4f5" stroke="#1c4f7c" stroke-width="1.0" stroke-linejoin="round" stroke-linecap="round" /><path d="M4.5 3L13.5 8" fill="none" stroke="#1c4f7c" stroke-width="0.9" stroke-linejoin="round" stroke-linecap="round" /></svg>
<div class="t" style="left:450px;top:84px;color:#3b3b3b">梁合并</div>
<svg style="left:501.5px;top:89.5px;" width="5" height="3" viewBox="0 0 5 3"><path d="M0 0h5l-2.5 3z" fill="#4a4a4a"/></svg>
<svg style="left:430px;top:106px;" width="16" height="16" viewBox="0 0 16 16"><path d="M1 1H15V15.5H11V5H5V15.5H1Z" fill="#f2fafb" stroke="#1c4f7c" stroke-width="1.3" stroke-linejoin="round" stroke-linecap="round" /><path d="M2.2 2.2H13.8" fill="none" stroke="#bfe3e6" stroke-width="1.2" stroke-linejoin="round" stroke-linecap="round" /></svg>
<div class="t" style="left:450px;top:107px;color:#3b3b3b">墙梁合并</div>
<svg style="left:501.5px;top:112.5px;" width="5" height="3" viewBox="0 0 5 3"><path d="M0 0h5l-2.5 3z" fill="#4a4a4a"/></svg>
<svg style="left:521px;top:60px;" width="16" height="16" viewBox="0 0 16 16"><rect x="0" y="0" width="12" height="16" fill="#d3eff0"/><path d="M1.5 8.5L8.5 4L15 7.5L8 12.5Z" fill="#fff" stroke="#1c4f7c" stroke-width="1.2" stroke-linejoin="round" stroke-linecap="round" /><path d="M1.5 8.5V10L8 14L15 9V7.5" fill="none" stroke="#1c4f7c" stroke-width="1.0" stroke-linejoin="round" stroke-linecap="round" /><path d="M7 6.5h1M9.5 8h1M6 9h1" fill="none" stroke="#1c4f7c" stroke-width="0.9" stroke-linejoin="round" stroke-linecap="round" /><path d="M5 4.5l1 1M11.5 3.5l-1 1.2" fill="none" stroke="#1c4f7c" stroke-width="0.8" stroke-linejoin="round" stroke-linecap="round" /></svg>
<div class="t" style="left:540px;top:61px;color:#3b3b3b">挑板合并</div>
<svg style="left:521px;top:83px;" width="16" height="16" viewBox="0 0 16 16"><rect x="6.4" y="0.8" width="3.2" height="4" rx="0.8" fill="#fff" stroke="#1c4f7c" stroke-width="1.1"/><rect x="6.4" y="11.2" width="3.2" height="4" rx="0.8" fill="#fff" stroke="#1c4f7c" stroke-width="1.1"/><rect x="0.8" y="6.4" width="4" height="3.2" rx="0.8" fill="#fff" stroke="#1c4f7c" stroke-width="1.1"/><rect x="11.2" y="6.4" width="4" height="3.2" rx="0.8" fill="#fff" stroke="#1c4f7c" stroke-width="1.1"/><circle cx="8" cy="8" r="1.9" fill="#5cc5c5" stroke="#22a2ab" stroke-width="0.8"/></svg>
<div class="t" style="left:540px;top:84px;color:#3b3b3b">相互裁切</div>
<svg style="left:521px;top:106px;" width="16" height="16" viewBox="0 0 16 16"><rect x="6.4" y="0.6" width="3.2" height="3.6" rx="0.8" fill="#fff" stroke="#1c4f7c" stroke-width="1.1"/><rect x="6.4" y="11.8" width="3.2" height="3.6" rx="0.8" fill="#fff" stroke="#1c4f7c" stroke-width="1.1"/><rect x="0.7" y="6.6" width="14.6" height="2.8" rx="1" fill="#fff" stroke="#1c4f7c" stroke-width="1.1"/></svg>
<div class="t" style="left:540px;top:107px;color:#3b3b3b">相互打断</div>
<svg style="left:667px;top:60px;" width="16" height="16" viewBox="0 0 16 16"><rect x="0.8" y="1" width="14.4" height="12.5" rx="1" fill="#fff" stroke="#1c4f7c" stroke-width="1.3"/><path d="M0.8 4.3H15.2" fill="none" stroke="#1c4f7c" stroke-width="1.1" stroke-linejoin="round" stroke-linecap="round" /><path d="M9.5 2.7h.8M11.5 2.7h.8M13.3 2.7h.5" fill="none" stroke="#1c4f7c" stroke-width="1.0" stroke-linejoin="round" stroke-linecap="round" /><path d="M2.8 6.5h2M6 6.5h2M9.2 6.5h2M2.8 8.8h2M6 8.8h2M9.2 8.8h2M2.8 11h2M6 11h2" fill="none" stroke="#1c4f7c" stroke-width="1.0" stroke-linejoin="round" stroke-linecap="round" /><rect x="10" y="10" width="6" height="6" fill="#fff"/><path d="M10.8 10.8l4.2 4.2M15.0 10.8l-4.2 4.2" stroke="#e8474c" stroke-width="1.3" stroke-linecap="round"/></svg>
<div class="t" style="left:686px;top:61px;color:#3b3b3b">删除属性</div>
<svg style="left:667px;top:83px;" width="16" height="16" viewBox="0 0 16 16"><path d="M1 4.5L3.5 2.5L8.5 6L12 2L15 4V12L11 9.5L8 13.5L1 9.5Z" fill="#a9c3c8" stroke="#1c4f7c" stroke-width="1.0" stroke-linejoin="round" stroke-linecap="round" /><path d="M3.5 2.5V7.5L8.5 11V6M12 2V7" fill="none" stroke="#1c4f7c" stroke-width="0.8" stroke-linejoin="round" stroke-linecap="round" /><path d="M1 4.5V9.5" fill="none" stroke="#1c4f7c" stroke-width="1.0" stroke-linejoin="round" stroke-linecap="round" /><circle cx="10.8" cy="10.8" r="2.9" fill="#e9fbfb" stroke="#22a2ab" stroke-width="1.2"/><path d="M13 13l2.3 2.3" fill="none" stroke="#22a2ab" stroke-width="1.5" stroke-linejoin="round" stroke-linecap="round" /></svg>
<div class="t" style="left:686px;top:84px;color:#3b3b3b">搜索外墙</div>
<svg style="left:667px;top:106px;" width="16" height="16" viewBox="0 0 16 16"><path d="M1 5L3.5 3.5L11 7V15L8.5 16L1 12.5Z" fill="#dff4f5" stroke="#1c4f7c" stroke-width="1.0" stroke-linejoin="round" stroke-linecap="round" /><path d="M1 5L8.5 8.5V16M8.5 8.5L11 7" fill="none" stroke="#1c4f7c" stroke-width="0.9" stroke-linejoin="round" stroke-linecap="round" /><path d="M3.5 3.5V2L5 1.2" fill="none" stroke="#1c4f7c" stroke-width="0.9" stroke-linejoin="round" stroke-linecap="round" /><path d="M9.5 3h5" fill="none" stroke="#22a2ab" stroke-width="1.1" stroke-linejoin="round" stroke-linecap="round" /><path d="M13.2 1.2L16 3l-2.8 1.8Z" fill="#22a2ab"/><path d="M4 11.5h5" fill="none" stroke="#22a2ab" stroke-width="1.1" stroke-linejoin="round" stroke-linecap="round" /><path d="M5 9.7L2.2 11.5 5 13.3Z" fill="#22a2ab"/></svg>
<div class="t" style="left:686px;top:107px;color:#3b3b3b">外墙方向</div>
<svg style="left:1298px;top:60px;" width="16" height="16" viewBox="0 0 16 16"><path d="M1.5 4.5L6 1.5L9.5 3.5V7L14 9.5V12L9.5 15L1.5 11Z" fill="#eef7f8" stroke="#1c4f7c" stroke-width="1.0" stroke-linejoin="round" stroke-linecap="round" /><path d="M1.5 4.5L5 6.5V10L9.5 12.5V15M5 6.5L9.5 3.5M9.5 12.5L14 9.5" fill="none" stroke="#1c4f7c" stroke-width="0.9" stroke-linejoin="round" stroke-linecap="round" /><path d="M1.5 4.5L5 6.5V10L9.5 12.5V15L1.5 11Z" fill="#a9c3c8" stroke="#1c4f7c" stroke-width="0.9" stroke-linejoin="round" stroke-linecap="round" /><rect x="10.5" y="10.5" width="5.5" height="5.5" fill="#fff"/><path d="M11.2 11.2l4 4M15.2 11.2l-4 4" stroke="#e8474c" stroke-width="1.3" stroke-linecap="round"/></svg>
<div class="t" style="left:1317px;top:61px;color:#3b3b3b">删除构件</div>
<svg style="left:1298px;top:83px;" width="16" height="16" viewBox="0 0 16 16"><path d="M1.5 1v5M1.5 1.5h3M1.5 3.5h2" fill="none" stroke="#1c4f7c" stroke-width="0.9" stroke-linejoin="round" stroke-linecap="round" /><path d="M2 9.5L11 4a2 2 0 0 1 2.5 3L5 12.5a2 2 0 0 1-3-3Z" fill="#eef7f8" stroke="#1c4f7c" stroke-width="1.1" stroke-linejoin="round" stroke-linecap="round" /><path d="M11 4a2 2 0 0 0 2 3.3" fill="none" stroke="#1c4f7c" stroke-width="0.9" stroke-linejoin="round" stroke-linecap="round" /><path d="M10.8 10.8l4.2 4.2M15.0 10.8l-4.2 4.2" stroke="#e8474c" stroke-width="1.3" stroke-linecap="round"/></svg>
<div class="t" style="left:1317px;top:84px;color:#3b3b3b">删除配筋</div>
<svg style="left:1298px;top:106px;" width="16" height="16" viewBox="0 0 16 16"><rect x="0.8" y="0.8" width="14" height="14" rx="1" fill="#fff" stroke="#1c4f7c" stroke-width="1.3"/><circle cx="4.5" cy="4.5" r="1.7" fill="#e9fbfb" stroke="#22a2ab" stroke-width="1.1"/><circle cx="11" cy="4.5" r="1.7" fill="#e9fbfb" stroke="#22a2ab" stroke-width="1.1"/><circle cx="4.5" cy="11" r="1.7" fill="#e9fbfb" stroke="#22a2ab" stroke-width="1.1"/><rect x="8.8" y="8.8" width="7" height="7" fill="#fff"/><path d="M10 10l4.5 4.5M14.5 10l-4.5 4.5" stroke="#e8474c" stroke-width="1.3" stroke-linecap="round"/></svg>
<div class="t" style="left:1317px;top:107px;color:#3b3b3b">删除埋件</div>
<div class="a" style="left:0px;top:135px;width:1920px;height:18px;background:#eef1f2"></div>
<div class="a" style="left:0px;top:153px;width:1920px;height:1px;background:#c9caca"></div>
<div class="a" style="left:0px;top:154px;width:1920px;height:1px;background:#dfe0e0"></div>
<div class="t" style="left:-21px;top:137px;width:100px;text-align:center;color:#6e6e6e">PM模型</div>
<div class="t" style="left:96.5px;top:137px;width:100px;text-align:center;color:#6e6e6e">识别CAD建模</div>
<div class="t" style="left:237px;top:137px;width:100px;text-align:center;color:#6e6e6e">楼层</div>
<div class="t" style="left:418px;top:137px;width:100px;text-align:center;color:#6e6e6e">模型处理</div>
<div class="t" style="left:620px;top:137px;width:100px;text-align:center;color:#6e6e6e">预制属性指定</div>
<div class="t" style="left:888px;top:137px;width:100px;text-align:center;color:#6e6e6e">预制构件</div>
<div class="t" style="left:1109px;top:137px;width:100px;text-align:center;color:#6e6e6e">修改</div>
<div class="t" style="left:1187px;top:137px;width:100px;text-align:center;color:#6e6e6e">预留预埋布置</div>
<div class="t" style="left:1281px;top:137px;width:100px;text-align:center;color:#6e6e6e">编辑</div>
<div class="t" style="left:1354px;top:137px;width:100px;text-align:center;color:#6e6e6e">指标统计</div>
<div class="t" style="left:1411px;top:137px;width:100px;text-align:center;color:#6e6e6e">检查</div>
<div class="a" style="left:0px;top:155px;width:320px;height:858px;background:#e9e9e9"></div>
<div class="a" style="left:0px;top:155px;width:320px;height:35px;background:#f5f5f5"></div>
<div class="a" style="left:0px;top:190px;width:320px;height:2px;background:#e6e6e6"></div>
<div class="t" style="left:4px;top:163px;font-size:16px;line-height:22px;height:22px;color:#454545">视图浏览器</div>
<svg style="left:286px;top:170px;" width="9" height="6" viewBox="0 0 9 6"><path d="M0 0.5h9l-4.5 5z" fill="#666"/></svg>
<svg style="left:305px;top:168px;" width="9" height="9" viewBox="0 0 9 9"><path d="M1 1l7 7M8 1l-7 7" stroke="#666" stroke-width="1.4" fill="none"/></svg>
<div class="a" style="left:5px;top:192px;width:315px;height:791px;background:#fdfdfd"></div>
<div class="a" style="left:320px;top:155px;width:3px;height:827px;background:#d9d9d9"></div>
<svg style="left:11.5px;top:199.5px;" width="9" height="9" viewBox="0 0 9 9"><rect x="0.5" y="0.5" width="8" height="8" rx="1" fill="#fff" stroke="#9a9a9a"/><path d="M2.5 4.5h4" stroke="#3a4d9a" stroke-width="1"/></svg>
<svg style="left:28px;top:196px;" width="16" height="16" viewBox="0 0 16 16"><rect x="0" y="1.3" width="14" height="3.7" fill="#0e8a8a"/><rect x="9" y="2.4000000000000004" width="4" height="1.5" fill="#fff"/><rect x="0" y="6.2" width="14" height="3.7" fill="#0e8a8a"/><rect x="9" y="7.300000000000001" width="4" height="1.5" fill="#fff"/><rect x="0" y="11.1" width="14" height="3.7" fill="#0e8a8a"/><rect x="9" y="12.2" width="4" height="1.5" fill="#fff"/></svg>
<div class="t" style="left:47px;top:197px;color:#333;">项目信息</div>
<svg style="left:30.5px;top:223.5px;" width="9" height="9" viewBox="0 0 9 9"><rect x="0.5" y="0.5" width="8" height="8" rx="1" fill="#fff" stroke="#9a9a9a"/><path d="M2.5 4.5h4" stroke="#3a4d9a" stroke-width="1"/></svg>
<svg style="left:46px;top:220px;" width="16" height="16" viewBox="0 0 16 16"><path d="M1.5 4.5L8 1.5L14.5 4.5V11.5L8 14.5L1.5 11.5Z" fill="none" stroke="#0e8a8a" stroke-width="1.3" stroke-linejoin="round" stroke-linecap="round"/><path d="M1.5 4.5L8 7.5L14.5 4.5M8 7.5V14.5" fill="none" stroke="#0e8a8a" stroke-width="1.3" stroke-linejoin="round" stroke-linecap="round"/></svg>
<div class="t" style="left:66px;top:221px;color:#333;">模型视图</div>
<svg style="left:65px;top:244px;" width="16" height="16" viewBox="0 0 16 16"><path d="M7 13L1.5 10.5V4.5L8 1.5L14.5 4.5V7" fill="none" stroke="#0e8a8a" stroke-width="1.3" stroke-linejoin="round" stroke-linecap="round"/><path d="M1.5 4.5L8 7.5L14.5 4.5" fill="none" stroke="#0e8a8a" stroke-width="1.3" stroke-linejoin="round" stroke-linecap="round"/><path d="M9 9.500h5.5M9 11.700h5.5M9 13.900h5.500" fill="none" stroke="#0e8a8a" stroke-width="1.1" stroke-linejoin="round" stroke-linecap="round"/></svg>
<div class="t" style="left:85px;top:245px;color:#333;">辅助模型</div>
<svg style="left:65px;top:268px;" width="16" height="16" viewBox="0 0 16 16"><path d="M1.5 4.5C4 1.5 12 1.5 14.5 4.5V12.500C12 14.500 4 14.500 1.500 12.500Z" fill="none" stroke="#0e8a8a" stroke-width="1.3" stroke-linejoin="round" stroke-linecap="round"/><path d="M1.500 4.500H14.500M1.500 8.500H14.500M1.500 12.500H14.500M8 2.300V14" fill="none" stroke="#0e8a8a" stroke-width="1.2" stroke-linejoin="round" stroke-linecap="round"/></svg>
<div class="t" style="left:85px;top:269px;color:#333;">全楼模型</div>
<svg style="left:49.5px;top:295.5px;" width="9" height="9" viewBox="0 0 9 9"><rect x="0.5" y="0.5" width="8" height="8" rx="1" fill="#fff" stroke="#9a9a9a"/><path d="M2.5 4.5h4" stroke="#3a4d9a" stroke-width="1"/></svg>
<svg style="left:65.5px;top:292px;" width="16" height="16" viewBox="0 0 16 16"><path d="M0.800 6.7L3.600 3.2H14.300L11.500 6.7ZM0.800 6.7V12.7H11.500V6.7M11.500 12.7L14.300 9.2V3.2" fill="none" stroke="#0e8a8a" stroke-width="1.2" stroke-linejoin="round" stroke-linecap="round"/><path d="M7.1 3.2L4.3 6.7V12.7" fill="none" stroke="#0e8a8a" stroke-width="1.0" stroke-linejoin="round" stroke-linecap="round"/><path d="M10.7 3.2L7.9 6.7V12.7" fill="none" stroke="#0e8a8a" stroke-width="1.0" stroke-linejoin="round" stroke-linecap="round"/><path d="M0.800 11.200H11.500L14.300 7.700" fill="none" stroke="#0e8a8a" stroke-width="1.0" stroke-linejoin="round" stroke-linecap="round"/></svg>
<div class="t" style="left:85px;top:293px;color:#333;">自然层</div>
<div class="a" style="left:5px;top:312px;width:315px;height:24px;background:#deeeea"></div>
<svg style="left:84.5px;top:316px;" width="16" height="16" viewBox="0 0 16 16"><path d="M0.800 7.7L3.600 4.2H14.300L11.500 7.7ZM0.800 7.7V11.7H11.500V7.7M11.500 11.7L14.300 8.2V4.2" fill="none" stroke="#0e8a8a" stroke-width="1.2" stroke-linejoin="round" stroke-linecap="round"/><path d="M7.1 4.2L4.3 7.7V11.7" fill="none" stroke="#0e8a8a" stroke-width="1.0" stroke-linejoin="round" stroke-linecap="round"/><path d="M10.7 4.2L7.9 7.7V11.7" fill="none" stroke="#0e8a8a" stroke-width="1.0" stroke-linejoin="round" stroke-linecap="round"/></svg>
<div class="t" style="left:104px;top:317px;color:#333;font-weight:bold;color:#222;letter-spacing:0.75px;">自然层1(标准层1)</div>
<svg style="left:84.5px;top:340px;" width="16" height="16" viewBox="0 0 16 16"><path d="M0.800 7.7L3.600 4.2H14.300L11.500 7.7ZM0.800 7.7V11.7H11.500V7.7M11.500 11.7L14.300 8.2V4.2" fill="none" stroke="#0e8a8a" stroke-width="1.2" stroke-linejoin="round" stroke-linecap="round"/><path d="M7.1 4.2L4.3 7.7V11.7" fill="none" stroke="#0e8a8a" stroke-width="1.0" stroke-linejoin="round" stroke-linecap="round"/><path d="M10.7 4.2L7.9 7.7V11.7" fill="none" stroke="#0e8a8a" stroke-width="1.0" stroke-linejoin="round" stroke-linecap="round"/></svg>
<div class="t" style="left:104px;top:341px;color:#333;">自然层2(标准层2)</div>
<svg style="left:84.5px;top:364px;" width="16" height="16" viewBox="0 0 16 16"><path d="M0.800 7.7L3.600 4.2H14.300L11.500 7.7ZM0.800 7.7V11.7H11.500V7.7M11.500 11.7L14.300 8.2V4.2" fill="none" stroke="#0e8a8a" stroke-width="1.2" stroke-linejoin="round" stroke-linecap="round"/><path d="M7.1 4.2L4.3 7.7V11.7" fill="none" stroke="#0e8a8a" stroke-width="1.0" stroke-linejoin="round" stroke-linecap="round"/><path d="M10.7 4.2L7.9 7.7V11.7" fill="none" stroke="#0e8a8a" stroke-width="1.0" stroke-linejoin="round" stroke-linecap="round"/></svg>
<div class="t" style="left:104px;top:365px;color:#333;">自然层3(标准层3)</div>
<svg style="left:84.5px;top:388px;" width="16" height="16" viewBox="0 0 16 16"><path d="M0.800 7.7L3.600 4.2H14.300L11.500 7.7ZM0.800 7.7V11.7H11.500V7.7M11.500 11.7L14.300 8.2V4.2" fill="none" stroke="#0e8a8a" stroke-width="1.2" stroke-linejoin="round" stroke-linecap="round"/><path d="M7.1 4.2L4.3 7.7V11.7" fill="none" stroke="#0e8a8a" stroke-width="1.0" stroke-linejoin="round" stroke-linecap="round"/><path d="M10.7 4.2L7.9 7.7V11.7" fill="none" stroke="#0e8a8a" stroke-width="1.0" stroke-linejoin="round" stroke-linecap="round"/></svg>
<div class="t" style="left:104px;top:389px;color:#333;">自然层4(标准层3)</div>
<svg style="left:84.5px;top:412px;" width="16" height="16" viewBox="0 0 16 16"><path d="M0.800 7.7L3.600 4.2H14.300L11.500 7.7ZM0.800 7.7V11.7H11.500V7.7M11.500 11.7L14.300 8.2V4.2" fill="none" stroke="#0e8a8a" stroke-width="1.2" stroke-linejoin="round" stroke-linecap="round"/><path d="M7.1 4.2L4.3 7.7V11.7" fill="none" stroke="#0e8a8a" stroke-width="1.0" stroke-linejoin="round" stroke-linecap="round"/><path d="M10.7 4.2L7.9 7.7V11.7" fill="none" stroke="#0e8a8a" stroke-width="1.0" stroke-linejoin="round" stroke-linecap="round"/></svg>
<div class="t" style="left:104px;top:413px;color:#333;">自然层5(标准层3)</div>
<svg style="left:84.5px;top:436px;" width="16" height="16" viewBox="0 0 16 16"><path d="M0.800 7.7L3.600 4.2H14.300L11.500 7.7ZM0.800 7.7V11.7H11.500V7.7M11.500 11.7L14.300 8.2V4.2" fill="none" stroke="#0e8a8a" stroke-width="1.2" stroke-linejoin="round" stroke-linecap="round"/><path d="M7.1 4.2L4.3 7.7V11.7" fill="none" stroke="#0e8a8a" stroke-width="1.0" stroke-linejoin="round" stroke-linecap="round"/><path d="M10.7 4.2L7.9 7.7V11.7" fill="none" stroke="#0e8a8a" stroke-width="1.0" stroke-linejoin="round" stroke-linecap="round"/></svg>
<div class="t" style="left:104px;top:437px;color:#333;">自然层6(标准层3)</div>
<svg style="left:84.5px;top:460px;" width="16" height="16" viewBox="0 0 16 16"><path d="M0.800 7.7L3.600 4.2H14.300L11.500 7.7ZM0.800 7.7V11.7H11.500V7.7M11.500 11.7L14.300 8.2V4.2" fill="none" stroke="#0e8a8a" stroke-width="1.2" stroke-linejoin="round" stroke-linecap="round"/><path d="M7.1 4.2L4.3 7.7V11.7" fill="none" stroke="#0e8a8a" stroke-width="1.0" stroke-linejoin="round" stroke-linecap="round"/><path d="M10.7 4.2L7.9 7.7V11.7" fill="none" stroke="#0e8a8a" stroke-width="1.0" stroke-linejoin="round" stroke-linecap="round"/></svg>
<div class="t" style="left:104px;top:461px;color:#333;">自然层7(标准层4)</div>
<svg style="left:49.5px;top:487.5px;" width="9" height="9" viewBox="0 0 9 9"><rect x="0.5" y="0.5" width="8" height="8" rx="1" fill="#fff" stroke="#9a9a9a"/><path d="M2.5 4.5h4" stroke="#3a4d9a" stroke-width="1"/></svg>
<svg style="left:65.5px;top:484px;" width="16" height="16" viewBox="0 0 16 16"><path d="M0.800 7.2L3.600 3.7H14.300L11.500 7.2ZM0.800 7.2V12.2H11.500V7.2M11.500 12.2L14.300 8.7V3.7" fill="none" stroke="#0e8a8a" stroke-width="1.2" stroke-linejoin="round" stroke-linecap="round"/><path d="M8.899999999999999 3.7L6.1 7.2V12.2" fill="none" stroke="#0e8a8a" stroke-width="1.0" stroke-linejoin="round" stroke-linecap="round"/></svg>
<div class="t" style="left:85px;top:485px;color:#333;">标准层</div>
<svg style="left:84.5px;top:508px;" width="16" height="16" viewBox="0 0 16 16"><path d="M0.800 7.7L3.600 4.2H14.300L11.500 7.7ZM0.800 7.7V11.7H11.500V7.7M11.500 11.7L14.300 8.2V4.2" fill="none" stroke="#0e8a8a" stroke-width="1.2" stroke-linejoin="round" stroke-linecap="round"/></svg>
<div class="t" style="left:104px;top:509px;color:#333;">标准层1</div>
<svg style="left:84.5px;top:532px;" width="16" height="16" viewBox="0 0 16 16"><path d="M0.800 7.7L3.600 4.2H14.300L11.500 7.7ZM0.800 7.7V11.7H11.500V7.7M11.500 11.7L14.300 8.2V4.2" fill="none" stroke="#0e8a8a" stroke-width="1.2" stroke-linejoin="round" stroke-linecap="round"/></svg>
<div class="t" style="left:104px;top:533px;color:#333;">标准层2</div>
<svg style="left:84.5px;top:556px;" width="16" height="16" viewBox="0 0 16 16"><path d="M0.800 7.7L3.600 4.2H14.300L11.500 7.7ZM0.800 7.7V11.7H11.500V7.7M11.500 11.7L14.300 8.2V4.2" fill="none" stroke="#0e8a8a" stroke-width="1.2" stroke-linejoin="round" stroke-linecap="round"/></svg>
<div class="t" style="left:104px;top:557px;color:#333;">标准层3</div>
<svg style="left:84.5px;top:580px;" width="16" height="16" viewBox="0 0 16 16"><path d="M0.800 7.7L3.600 4.2H14.300L11.500 7.7ZM0.800 7.7V11.7H11.500V7.7M11.500 11.7L14.300 8.2V4.2" fill="none" stroke="#0e8a8a" stroke-width="1.2" stroke-linejoin="round" stroke-linecap="round"/></svg>
<div class="t" style="left:104px;top:581px;color:#333;">标准层4</div>
<div class="a" style="left:0px;top:983px;width:323px;height:30px;background:#e7e7e7"></div>
<div class="a" style="left:0px;top:988px;width:72px;height:22px;background:#fff"></div>
<div class="t" style="left:6px;top:992px;color:#222">视图浏览器</div>
<div class="t" style="left:79px;top:992px;color:#555">属性</div>
<div class="a" style="left:323px;top:155px;width:1597px;height:827px;background:#fff"></div>
<div class="a" style="left:1919px;top:155px;width:1px;height:827px;background:#c9c9c9"></div>
<div class="a" style="left:1808px;top:218px;width:51px;height:51px;background:#e3e3e3"></div>
<svg style="left:1808px;top:218px;" width="51" height="51" viewBox="0 0 51 51"><path d="M9 0H42L51 9V42L42 51H9L0 42V9Z" fill="#eaeaea"/></svg>
<div class="t" style="left:1808px;top:217px;width:51px;height:51px;line-height:51px;text-align:center;font-size:23px;color:#9c9c9c;font-weight:300;font-family:'Noto Sans CJK SC',sans-serif">上</div>
<svg style="left:0px;top:0px;" width="1920" height="1037" viewBox="0 0 1920 1037"><path d="M495.5 475.5H1534" stroke="#82dd82" stroke-width="1"/><circle cx="487.5" cy="475.5" r="8" fill="#fff" stroke="#82dd82" stroke-width="1.3"/><text x="487.5" y="480.0" text-anchor="middle" font-family="Liberation Serif,serif" font-size="13" fill="#333">F</text><circle cx="1542.5" cy="475.5" r="8" fill="#fff" stroke="#82dd82" stroke-width="1.3"/><text x="1542.5" y="480.0" text-anchor="middle" font-family="Liberation Serif,serif" font-size="13" fill="#333">F</text><path d="M495.5 534.5H1534" stroke="#82dd82" stroke-width="1"/><circle cx="487.5" cy="534.5" r="8" fill="#fff" stroke="#82dd82" stroke-width="1.3"/><text x="487.5" y="539.0" text-anchor="middle" font-family="Liberation Serif,serif" font-size="13" fill="#333">E</text><circle cx="1542.5" cy="534.5" r="8" fill="#fff" stroke="#82dd82" stroke-width="1.3"/><text x="1542.5" y="539.0" text-anchor="middle" font-family="Liberation Serif,serif" font-size="13" fill="#333">E</text><path d="M495.5 586.5H1534" stroke="#82dd82" stroke-width="1"/><circle cx="487.5" cy="586.5" r="8" fill="#fff" stroke="#82dd82" stroke-width="1.3"/><text x="487.5" y="591.0" text-anchor="middle" font-family="Liberation Serif,serif" font-size="13" fill="#333">D</text><circle cx="1542.5" cy="586.5" r="8" fill="#fff" stroke="#82dd82" stroke-width="1.3"/><text x="1542.5" y="591.0" text-anchor="middle" font-family="Liberation Serif,serif" font-size="13" fill="#333">D</text><path d="M495.5 625.5H1534" stroke="#82dd82" stroke-width="1"/><circle cx="487.5" cy="625.5" r="8" fill="#fff" stroke="#82dd82" stroke-width="1.3"/><text x="487.5" y="630.0" text-anchor="middle" font-family="Liberation Serif,serif" font-size="13" fill="#333">C</text><circle cx="1542.5" cy="625.5" r="8" fill="#fff" stroke="#82dd82" stroke-width="1.3"/><text x="1542.5" y="630.0" text-anchor="middle" font-family="Liberation Serif,serif" font-size="13" fill="#333">C</text><path d="M495.5 717.5H1534" stroke="#82dd82" stroke-width="1"/><circle cx="487.5" cy="717.5" r="8" fill="#fff" stroke="#82dd82" stroke-width="1.3"/><text x="487.5" y="722.0" text-anchor="middle" font-family="Liberation Serif,serif" font-size="13" fill="#333">B</text><circle cx="1542.5" cy="717.5" r="8" fill="#fff" stroke="#82dd82" stroke-width="1.3"/><text x="1542.5" y="722.0" text-anchor="middle" font-family="Liberation Serif,serif" font-size="13" fill="#333">B</text><path d="M495.5 739.5H1534" stroke="#82dd82" stroke-width="1"/><circle cx="487.5" cy="739.5" r="8" fill="#fff" stroke="#82dd82" stroke-width="1.3"/><text x="487.5" y="744.0" text-anchor="middle" font-family="Liberation Serif,serif" font-size="13" fill="#333">A</text><circle cx="1542.5" cy="739.5" r="8" fill="#fff" stroke="#82dd82" stroke-width="1.3"/><text x="1542.5" y="744.0" text-anchor="middle" font-family="Liberation Serif,serif" font-size="13" fill="#333">A</text><path d="M595.5 440V840" stroke="#82dd82" stroke-width="1"/><circle cx="596.0" cy="848.5" r="8" fill="#fff" stroke="#82dd82" stroke-width="1.3"/><text x="596.0" y="853.5" text-anchor="middle" font-family="Liberation Serif,serif" font-size="14.5" fill="#333">1</text><path d="M666.5 440V840" stroke="#82dd82" stroke-width="1"/><circle cx="667.0" cy="848.5" r="8" fill="#fff" stroke="#82dd82" stroke-width="1.3"/><text x="667.0" y="853.5" text-anchor="middle" font-family="Liberation Serif,serif" font-size="14.5" fill="#333">3</text><path d="M746.5 440V840" stroke="#82dd82" stroke-width="1"/><circle cx="747.0" cy="848.5" r="8" fill="#fff" stroke="#82dd82" stroke-width="1.3"/><text x="747.0" y="853.5" text-anchor="middle" font-family="Liberation Serif,serif" font-size="14.5" fill="#333">5</text><path d="M805.5 440V840" stroke="#82dd82" stroke-width="1"/><circle cx="806.0" cy="848.5" r="8" fill="#fff" stroke="#82dd82" stroke-width="1.3"/><text x="806.0" y="853.5" text-anchor="middle" font-family="Liberation Serif,serif" font-size="14.5" fill="#333">7</text><path d="M863.5 440V840" stroke="#82dd82" stroke-width="1"/><circle cx="864.0" cy="848.5" r="8" fill="#fff" stroke="#82dd82" stroke-width="1.3"/><text x="864.0" y="853.5" text-anchor="middle" font-family="Liberation Serif,serif" font-size="14.5" fill="#333">9</text><path d="M944.5 440V840" stroke="#82dd82" stroke-width="1"/><circle cx="945.0" cy="848.5" r="8" fill="#fff" stroke="#82dd82" stroke-width="1.3"/><text transform="translate(944.8,853) scale(0.7,1)" text-anchor="middle" font-family="Liberation Serif,serif" font-size="13.5" letter-spacing="-0.3" fill="#333">11</text><path d="M1084.5 440V840" stroke="#82dd82" stroke-width="1"/><circle cx="1085.0" cy="848.5" r="8" fill="#fff" stroke="#82dd82" stroke-width="1.3"/><text transform="translate(1084.8,853) scale(0.7,1)" text-anchor="middle" font-family="Liberation Serif,serif" font-size="13.5" letter-spacing="-0.3" fill="#333">15</text><path d="M1164.5 440V840" stroke="#82dd82" stroke-width="1"/><circle cx="1165.0" cy="848.5" r="8" fill="#fff" stroke="#82dd82" stroke-width="1.3"/><text transform="translate(1164.8,853) scale(0.7,1)" text-anchor="middle" font-family="Liberation Serif,serif" font-size="13.5" letter-spacing="-0.3" fill="#333">17</text><path d="M1223.5 440V840" stroke="#82dd82" stroke-width="1"/><circle cx="1224.0" cy="848.5" r="8" fill="#fff" stroke="#82dd82" stroke-width="1.3"/><text transform="translate(1223.8,853) scale(0.7,1)" text-anchor="middle" font-family="Liberation Serif,serif" font-size="13.5" letter-spacing="-0.3" fill="#333">19</text><path d="M1282.5 440V840" stroke="#82dd82" stroke-width="1"/><circle cx="1283.0" cy="848.5" r="8" fill="#fff" stroke="#82dd82" stroke-width="1.3"/><text transform="translate(1282.8,853) scale(0.7,1)" text-anchor="middle" font-family="Liberation Serif,serif" font-size="13.5" letter-spacing="-0.3" fill="#333">21</text><path d="M1362.5 440V840" stroke="#82dd82" stroke-width="1"/><circle cx="1363.0" cy="848.5" r="8" fill="#fff" stroke="#82dd82" stroke-width="1.3"/><text transform="translate(1362.8,853) scale(0.7,1)" text-anchor="middle" font-family="Liberation Serif,serif" font-size="13.5" letter-spacing="-0.3" fill="#333">23</text><path d="M1432.5 440V840" stroke="#82dd82" stroke-width="1"/><circle cx="1433.0" cy="848.5" r="8" fill="#fff" stroke="#82dd82" stroke-width="1.3"/><text transform="translate(1432.8,853) scale(0.7,1)" text-anchor="middle" font-family="Liberation Serif,serif" font-size="13.5" letter-spacing="-0.3" fill="#333">25</text></svg>
<div class="a" style="left:323px;top:982px;width:1597px;height:31px;background:#e9e9e9"></div>
<div class="a" style="left:323px;top:981px;width:1597px;height:1px;background:#cfcfcf"></div>
<div class="a" style="left:322px;top:982px;width:1316px;height:30px;background:#fdfdfd;border-radius:4px"></div>
<div class="a" style="left:150px;top:0px;width:0px;height:0px;"></div>
<svg style="left:326px;top:989px;" width="2" height="14" viewBox="0 0 2 14"><circle cx="1" cy="1" r="0.9" fill="#8a8a8a"/><circle cx="1" cy="5" r="0.9" fill="#8a8a8a"/><circle cx="1" cy="9" r="0.9" fill="#8a8a8a"/><circle cx="1" cy="13" r="0.9" fill="#8a8a8a"/></svg>
<div class="t" style="left:339px;top:989px;color:#7a7a7a">在此输入命令</div>
<div class="sep" style="left:936px;top:987px;height:20px;background:#d0d0d0"></div>
<svg style="left:947px;top:992px;" width="10" height="8" viewBox="0 0 10 8"><path d="M1 6.5l4-4 4 4" stroke="#1c4f7c" stroke-width="1.4" fill="none"/></svg>
<svg style="left:971px;top:989px;" width="2" height="14" viewBox="0 0 2 14"><circle cx="1" cy="1" r="0.9" fill="#8a8a8a"/><circle cx="1" cy="5" r="0.9" fill="#8a8a8a"/><circle cx="1" cy="9" r="0.9" fill="#8a8a8a"/><circle cx="1" cy="13" r="0.9" fill="#8a8a8a"/></svg>
<svg style="left:1364px;top:989px;" width="2" height="14" viewBox="0 0 2 14"><circle cx="1" cy="1" r="0.9" fill="#8a8a8a"/><circle cx="1" cy="5" r="0.9" fill="#8a8a8a"/><circle cx="1" cy="9" r="0.9" fill="#8a8a8a"/><circle cx="1" cy="13" r="0.9" fill="#8a8a8a"/></svg>
<div class="a" style="left:979px;top:985px;width:24px;height:24px;background:#c3e0db;border:1px solid #3a9e8d"></div>
<svg style="left:982px;top:988px;" width="18" height="18" viewBox="0 0 18 18"><rect x="1.800" y="5.300" width="2.600" height="6" fill="#e8474c"/><path d="M6.500 4.500V13.500M7.500 3.500H13.500" fill="none" stroke="#1c4f7c" stroke-width="1.3" stroke-linejoin="round" stroke-linecap="round" /><circle cx="6.500" cy="3.500" r="1.300" fill="#fff" stroke="#1c4f7c" stroke-width="1"/><circle cx="6.500" cy="14.500" r="1.300" fill="#fff" stroke="#1c4f7c" stroke-width="1"/><path d="M12.500 10.500v6M9.500 13.500h6" fill="none" stroke="#35b0b8" stroke-width="1.3" stroke-linejoin="round" stroke-linecap="round" /></svg>
<svg style="left:1008px;top:988px;" width="18" height="18" viewBox="0 0 18 18"><path d="M2.250 6.200L12.040 1.200L15.600 3.100L6 8Z" fill="#fff"/><path d="M2.250 6.200L6 8V16.600L2.250 15.200Z" fill="#b9cdd1"/><path d="M6 8L15.600 3.100V11.500L6 16.600Z" fill="#eef7f8"/><path d="M6 16.600L2.250 15.200V6.200L12.040 1.200L15.600 3.100V5.800" fill="none" stroke="#1c4f7c" stroke-width="1.3" stroke-linejoin="round" stroke-linecap="round" /><path d="M6.5 8.25H16.299999999999997V17.049999999999997H7.5Z" fill="#fdfdfd" opacity="0.92"/><path d="M8.1 12.45H14.1L12.899999999999999 16.4H9.299999999999999Z" fill="#a8e6e2" stroke="#22a2ab" stroke-width="1.2" stroke-linejoin="round" stroke-linecap="round" /><path d="M7.8 12.45H14.399999999999999" fill="none" stroke="#22a2ab" stroke-width="1.5" stroke-linejoin="round" stroke-linecap="round" /><path d="M9.2 9.25H12.8L11.0 11.049999999999999Z" fill="#22a2ab"/><path d="M11.0 9.45C11.0 7.549999999999999 12.1 7.1499999999999995 14.5 7.35L16.7 9.35" fill="none" stroke="#22a2ab" stroke-width="1.4" stroke-linejoin="round" stroke-linecap="round" /></svg>
<svg style="left:1035px;top:988px;" width="18" height="18" viewBox="0 0 18 18"><path d="M3.170 3.700L7.960 1.200L12.750 3.700L7.960 6.100Z" fill="#fff"/><path d="M3.170 3.700L7.960 6.100V16.400L6.300 16.400L3.170 14.300Z" fill="#b9cdd1"/><path d="M7.960 6.100L12.750 3.700V12L7.960 16.400Z" fill="#eef7f8"/><path d="M6.300 16.400L3.170 14.300V3.700L7.960 1.200L12.750 3.700V5.800" fill="none" stroke="#1c4f7c" stroke-width="1.3" stroke-linejoin="round" stroke-linecap="round" /><path d="M5.199999999999999 8.25H15.0V17.049999999999997H6.2Z" fill="#fdfdfd" opacity="0.92"/><path d="M6.8 12.45H12.8L11.6 16.4H8.0Z" fill="#a8e6e2" stroke="#22a2ab" stroke-width="1.2" stroke-linejoin="round" stroke-linecap="round" /><path d="M6.5 12.45H13.1" fill="none" stroke="#22a2ab" stroke-width="1.5" stroke-linejoin="round" stroke-linecap="round" /><path d="M7.9 9.25H11.5L9.7 11.049999999999999Z" fill="#22a2ab"/><path d="M9.7 9.45C9.7 7.549999999999999 10.8 7.1499999999999995 13.2 7.35L15.399999999999999 9.35" fill="none" stroke="#22a2ab" stroke-width="1.4" stroke-linejoin="round" stroke-linecap="round" /></svg>
<svg style="left:1060px;top:988px;" width="18" height="18" viewBox="0 0 18 18"><path d="M1.080 6.400L9 2.250L16.900 6.400L9 10.600Z" fill="#fff"/><path d="M1.080 6.400L9 10.600V13.900L1.080 9.750Z" fill="#b9cdd1"/><path d="M6.500 12.700L1.080 9.750V6.400L9 2.250L16.400 6.150" fill="none" stroke="#1c4f7c" stroke-width="1.3" stroke-linejoin="round" stroke-linecap="round" /><path d="M6.300000000000001 8.25H16.1V17.049999999999997H7.300000000000001Z" fill="#fdfdfd" opacity="0.92"/><path d="M7.9 12.45H13.9L12.7 16.4H9.1Z" fill="#a8e6e2" stroke="#22a2ab" stroke-width="1.2" stroke-linejoin="round" stroke-linecap="round" /><path d="M7.6000000000000005 12.45H14.2" fill="none" stroke="#22a2ab" stroke-width="1.5" stroke-linejoin="round" stroke-linecap="round" /><path d="M9.0 9.25H12.600000000000001L10.8 11.049999999999999Z" fill="#22a2ab"/><path d="M10.8 9.45C10.8 7.549999999999999 11.9 7.1499999999999995 14.3 7.35L16.5 9.35" fill="none" stroke="#22a2ab" stroke-width="1.4" stroke-linejoin="round" stroke-linecap="round" /></svg>
<div class="a" style="left:1083px;top:985px;width:24px;height:24px;background:#c3e0db;border:1px solid #3a9e8d"></div>
<svg style="left:1086px;top:988px;" width="18" height="18" viewBox="0 0 18 18"><rect x="3.500" y="4.500" width="11" height="6.500" fill="#9fe3e0"/><path d="M3.500 3V15.500M14.500 3V9.500M5 2.500H13" fill="none" stroke="#1c4f7c" stroke-width="1.3" stroke-linejoin="round" stroke-linecap="round" /><circle cx="3.5" cy="2.5" r="1.300" fill="#fff" stroke="#1c4f7c" stroke-width="1"/><circle cx="14.5" cy="2.5" r="1.300" fill="#fff" stroke="#1c4f7c" stroke-width="1"/><circle cx="3.5" cy="15.5" r="1.300" fill="#fff" stroke="#1c4f7c" stroke-width="1"/><path d="M7.500 13.500C9.500 10.500 14 10.500 16.500 13.500C14 16.500 9.500 16.500 7.500 13.500Z" fill="#e6fbfb" stroke="#35b0b8" stroke-width="1.2" stroke-linejoin="round" stroke-linecap="round" /><circle cx="12" cy="13.500" r="1.500" fill="#35b0b8"/></svg>
<div class="a" style="left:1117px;top:985px;width:24px;height:24px;background:#c3e0db;border:1px solid #3a9e8d"></div>
<svg style="left:1120px;top:988px;" width="18" height="18" viewBox="0 0 18 18"><path d="M1.080 7.670L9 11.800V14.300L1.080 9.750Z" fill="#c4d8dc"/><path d="M16.670 7.670L9 11.800V14.300L16.670 9.750Z" fill="#e6f4f5"/><path d="M1.080 7.670L9 2.250L16.670 7.670L9 11.800Z" fill="#fff"/><path d="M1.080 7.670L9 2.250L16.670 7.670V9.750L9 14.300L1.080 9.750Z" fill="none" stroke="#1c4f7c" stroke-width="1.3" stroke-linejoin="round" stroke-linecap="round" /></svg>
<div class="a" style="left:1143px;top:985px;width:24px;height:24px;background:#c3e0db;border:1px solid #3a9e8d"></div>
<svg style="left:1146px;top:988px;" width="18" height="18" viewBox="0 0 18 18"><path d="M1.330 11.400L8 13.900L17.200 10.200V12.300L8 16L1.330 13.100Z" fill="#eaf5f6"/><path d="M4.200 7.300V12.400L8 13.900L12.600 12V7.200Z" fill="#c4d8dc"/><path d="M1.330 4.330L10.500 1.400L17.200 3.500V5.600L8 8.900L1.330 6.400Z" fill="#fff"/><path d="M1.330 4.330L10.500 1.400L17.200 3.500V5.600L8 8.900L1.330 6.400Z" fill="none" stroke="#1c4f7c" stroke-width="1.2" stroke-linejoin="round" stroke-linecap="round" /><path d="M1.330 4.330L8 6.800L17.200 3.500M8 6.800V8.900" fill="none" stroke="#1c4f7c" stroke-width="0.9" stroke-linejoin="round" stroke-linecap="round" /><path d="M4.200 7.500V12.300M12.600 7.300V11.900" fill="none" stroke="#1c4f7c" stroke-width="1.1" stroke-linejoin="round" stroke-linecap="round" /><path d="M4.200 12.400L1.330 11.400V13.100L8 16L17.200 12.300V10.200L12.600 12" fill="none" stroke="#1c4f7c" stroke-width="1.2" stroke-linejoin="round" stroke-linecap="round" /><path d="M8 13.900V16M4.200 12.400L8 13.900L12.600 12" fill="none" stroke="#1c4f7c" stroke-width="0.9" stroke-linejoin="round" stroke-linecap="round" /></svg>
<div class="a" style="left:1169px;top:985px;width:24px;height:24px;background:#c3e0db;border:1px solid #3a9e8d"></div>
<svg style="left:1172px;top:988px;" width="18" height="18" viewBox="0 0 18 18"><path d="M4.330 3.900L8.900 1.170L13.670 3.900L8.900 6.400Z" fill="#fff"/><path d="M4.330 3.900L8.900 6.400V16.670L4.330 13.900Z" fill="#b3c8cd"/><path d="M8.900 6.400L13.670 3.900V13.900L8.900 16.670Z" fill="#d3ebee"/><path d="M4.330 3.900L8.900 1.170L13.670 3.900V13.900L8.900 16.670L4.330 13.900Z" fill="none" stroke="#1c4f7c" stroke-width="1.3" stroke-linejoin="round" stroke-linecap="round" /></svg>
<div class="a" style="left:1195px;top:985px;width:24px;height:24px;background:#c3e0db;border:1px solid #3a9e8d"></div>
<svg style="left:1198px;top:988px;" width="18" height="18" viewBox="0 0 18 18"><path d="M2.250 7.670L12.670 1.400L16 3.500L5.600 9.400Z" fill="#fff"/><path d="M2.250 7.670L5.600 9.400V16.670L2.250 14.750Z" fill="#b3c8cd"/><path d="M5.600 9.400L16 3.500V11.400L5.600 16.670Z" fill="#d3ebee"/><path d="M2.250 7.670L12.670 1.400L16 3.500V11.400L5.600 16.670L2.250 14.750Z" fill="none" stroke="#1c4f7c" stroke-width="1.3" stroke-linejoin="round" stroke-linecap="round" /></svg>
<div class="a" style="left:1221px;top:985px;width:24px;height:24px;background:#c3e0db;border:1px solid #3a9e8d"></div>
<svg style="left:1224px;top:988px;" width="18" height="18" viewBox="0 0 18 18"><rect x="1.250" y="1.400" width="15.420" height="15" rx="1.300" fill="#dff5f6" stroke="#1c4f7c" stroke-width="1.600"/><circle cx="5" cy="5" r="1.500" fill="#eafafa" stroke="#35b0b8" stroke-width="1"/><circle cx="12.9" cy="5" r="1.500" fill="#eafafa" stroke="#35b0b8" stroke-width="1"/><circle cx="5" cy="13.1" r="1.500" fill="#eafafa" stroke="#35b0b8" stroke-width="1"/><circle cx="12.9" cy="13.1" r="1.500" fill="#eafafa" stroke="#35b0b8" stroke-width="1"/></svg>
<div class="a" style="left:1247px;top:985px;width:24px;height:24px;background:#c3e0db;border:1px solid #3a9e8d"></div>
<svg style="left:1250px;top:988px;" width="18" height="18" viewBox="0 0 18 18"><rect x="1.330" y="1.400" width="15.340" height="15" rx="0.800" fill="#fff" stroke="#1c4f7c" stroke-width="1.400"/><rect x="3.100" y="3.150" width="11.800" height="11.500" fill="#fff" stroke="#35b0b8" stroke-width="1.100"/><path d="M5 6.400H7.500M7.500 5.200V7.600M10.670 5.200V7.600M10.670 6.400H13" fill="none" stroke="#1c4f7c" stroke-width="1.1" stroke-linejoin="round" stroke-linecap="round" /><rect x="8.600" y="9.100" width="1.100" height="1.300" fill="#1c4f7c"/><path d="M6.100 11.400L7.600 12.500M9.170 12V12.900M12.200 11.400L10.700 12.500" fill="none" stroke="#1c4f7c" stroke-width="1.1" stroke-linejoin="round" stroke-linecap="round" /></svg>
<svg style="left:1283px;top:988px;" width="18" height="18" viewBox="0 0 18 18"><path d="M2 5.6L9.0 2L16 5.6L9.0 9.2Z" fill="#fff"/><path d="M2 5.6L9.0 9.2V16.6L2 13.000000000000002Z" fill="#bcd0d4"/><path d="M9.0 9.2L16 5.6V13.000000000000002L9.0 16.6Z" fill="#d6ecee"/><path d="M2 5.6L9.0 2L16 5.6V13.000000000000002L9.0 16.6L2 13.000000000000002Z" fill="none" stroke="#1c4f7c" stroke-width="1.3" stroke-linejoin="round" stroke-linecap="round" /><path d="M2 5.600L9 9.200L16 5.600M9 9.200V16.600" fill="none" stroke="#1c4f7c" stroke-width="1.2" stroke-linejoin="round" stroke-linecap="round" /></svg>
<svg style="left:1310px;top:988px;" width="18" height="18" viewBox="0 0 18 18"><path d="M1.5 5.2L9.0 1.3L16.5 5.2L9.0 9.100000000000001Z" fill="#fff"/><path d="M1.5 5.2L9.0 9.100000000000001V16.7L1.5 12.799999999999999Z" fill="#bcd0d4"/><path d="M9.0 9.100000000000001L16.5 5.2V12.799999999999999L9.0 16.7Z" fill="#d6ecee"/><path d="M1.5 5.2L9.0 1.3L16.5 5.2V12.799999999999999L9.0 16.7L1.5 12.799999999999999Z" fill="none" stroke="#1c4f7c" stroke-width="1.3" stroke-linejoin="round" stroke-linecap="round" /><path d="M11 10.300l3.600-1.800M11 12.900l3.600-1.800" fill="none" stroke="#35b0b8" stroke-width="1.3" stroke-linejoin="round" stroke-linecap="round" /></svg>
<svg style="left:1336px;top:988px;" width="18" height="18" viewBox="0 0 18 18"><path d="M1.5 5.2L9.0 1.3L16.5 5.2L9.0 9.100000000000001Z" fill="#fff"/><path d="M1.5 5.2L9.0 9.100000000000001V16.7L1.5 12.799999999999999Z" fill="#d6ecee"/><path d="M9.0 9.100000000000001L16.5 5.2V12.799999999999999L9.0 16.7Z" fill="#d6ecee"/><path d="M1.5 5.2L9.0 1.3L16.5 5.2V12.799999999999999L9.0 16.7L1.5 12.799999999999999Z" fill="none" stroke="#1c4f7c" stroke-width="1.3" stroke-linejoin="round" stroke-linecap="round" /><path d="M11 10.300l3.600-1.800M11 12.900l3.600-1.800M3.400 8.500l3.600 1.800M3.400 11.100l3.600 1.800" fill="none" stroke="#35b0b8" stroke-width="1.3" stroke-linejoin="round" stroke-linecap="round" /><path d="M7.200 4.600V2.800M9 3.800V1.800M10.800 4.600V2.800" fill="none" stroke="#35b0b8" stroke-width="0.9" stroke-linejoin="round" stroke-linecap="round" /></svg>
<svg style="left:1374px;top:988px;" width="18" height="18" viewBox="0 0 18 18"><path d="M15.900 7V4.200L12.900 1.200H4.400a1.500 1.500 0 0 0-1.500 1.500V15.300a1.500 1.500 0 0 0 1.500 1.500H12" fill="none" stroke="#1c4f7c" stroke-width="1.2" stroke-linejoin="round" stroke-linecap="round" /><path d="M12.900 1.200V4.200H15.900" fill="none" stroke="#1c4f7c" stroke-width="0.9" stroke-linejoin="round" stroke-linecap="round" /><rect x="0.800" y="4.850" width="14.200" height="7.850" rx="1.400" fill="#fff" stroke="#35b0b8" stroke-width="1.300"/><text x="7.900" y="11" text-anchor="middle" font-family="Liberation Serif,serif" font-weight="bold" font-size="6.800" fill="#1c4f7c">PM</text><path d="M5 14.600h6" fill="none" stroke="#9fdbe0" stroke-width="0.9" stroke-linejoin="round" stroke-linecap="round" /><path d="M15.300 10V15" stroke="#35b0b8" stroke-width="1.500"/><path d="M13 14.200H17.600L15.300 17.500Z" fill="#35b0b8"/></svg>
<svg style="left:1408px;top:988px;" width="18" height="18" viewBox="0 0 18 18"><path d="M15.900 7V4.200L12.900 1.200H4.400a1.500 1.500 0 0 0-1.500 1.500V15.300a1.500 1.500 0 0 0 1.500 1.500H12" fill="none" stroke="#1c4f7c" stroke-width="1.2" stroke-linejoin="round" stroke-linecap="round" /><path d="M12.900 1.200V4.200H15.900" fill="none" stroke="#1c4f7c" stroke-width="0.9" stroke-linejoin="round" stroke-linecap="round" /><rect x="0.800" y="4.850" width="14.200" height="7.850" rx="1.400" fill="#fff" stroke="#35b0b8" stroke-width="1.300"/><text x="7.900" y="11" text-anchor="middle" font-family="Liberation Serif,serif" font-weight="bold" font-size="6.800" fill="#1c4f7c">PM</text><path d="M5 14.600h6" fill="none" stroke="#9fdbe0" stroke-width="0.9" stroke-linejoin="round" stroke-linecap="round" /><path d="M15.300 17.500V12.500" stroke="#35b0b8" stroke-width="1.500"/><path d="M13 13.300H17.600L15.300 10Z" fill="#35b0b8"/></svg>
<svg style="left:1434px;top:988px;" width="18" height="18" viewBox="0 0 18 18"><path d="M9 15.800V3.500C9 0.500 15.800 0.500 15.800 3.500V14C15.800 16.800 9 16.800 9 15.800Z" fill="#d6ecee"/><path d="M9 15.800V3.500C9 2 11 1.300 12.400 1.300V16.200C11 16.200 9 16.200 9 15.800Z" fill="#a9c3c8"/><path d="M9 11V3.500C9 0.500 15.800 0.500 15.800 3.500V14C15.800 15.500 13.800 16.200 12 16.200" fill="none" stroke="#1c4f7c" stroke-width="1.3" stroke-linejoin="round" stroke-linecap="round" /><rect x="1.200" y="11.400" width="10.400" height="4.900" fill="#35b0b8"/><text x="6.400" y="15.400" text-anchor="middle" font-family="Liberation Sans,sans-serif" font-weight="bold" font-size="4.800" fill="#fff">ISM</text></svg>
<svg style="left:1460px;top:988px;" width="18" height="18" viewBox="0 0 18 18"><path d="M4.500 12A5.500 5.500 0 0 1 7.500 3.300" fill="none" stroke="#35b0b8" stroke-width="1.4" stroke-linejoin="round" stroke-linecap="round" /><path d="M13.500 6A5.500 5.500 0 0 1 10.500 14.700" fill="none" stroke="#35b0b8" stroke-width="1.4" stroke-linejoin="round" stroke-linecap="round" /><path d="M6.500 1.500L10.500 3.300L7 6Z" fill="#35b0b8"/><path d="M11.500 16.500L7.500 14.700L11 12Z" fill="#35b0b8"/></svg>
<svg style="left:1494px;top:988px;" width="18" height="18" viewBox="0 0 18 18"><path d="M2.500 5L7 2L10.500 4V8M2.500 5V14L6.500 16.500" fill="none" stroke="#1c4f7c" stroke-width="1.1" stroke-linejoin="round" stroke-linecap="round" /><path d="M2.500 5L6.500 7.500V16.500L2.500 14Z" fill="#a9c3c8" stroke="#1c4f7c" stroke-width="0.9" stroke-linejoin="round" stroke-linecap="round" /><path d="M6.500 7.500L10.500 4.500V8.500H6.500Z" fill="#dff4f5" stroke="#1c4f7c" stroke-width="0.9" stroke-linejoin="round" stroke-linecap="round" /><rect x="7.300" y="11" width="7" height="6.300" rx="1" fill="#fff" stroke="#35b0b8" stroke-width="1"/><rect x="9.500" y="8.500" width="7.500" height="7" rx="1" fill="#fff" stroke="#35b0b8" stroke-width="1.100"/><path d="M13.250 10.200v3.600M11.450 12h3.600" fill="none" stroke="#1c4f7c" stroke-width="1.3" stroke-linejoin="round" stroke-linecap="round" /></svg>
<svg style="left:1520px;top:988px;" width="18" height="18" viewBox="0 0 18 18"><path d="M2 5L8 2L13.500 4.500L7.500 8Z" fill="#c8efee" stroke="#35b0b8" stroke-width="1.1" stroke-linejoin="round" stroke-linecap="round" /><path d="M2 5V7L7.500 10L13.500 6.500V4.500" fill="none" stroke="#35b0b8" stroke-width="1.0" stroke-linejoin="round" stroke-linecap="round" /><path d="M5 10.500L10.500 8L16 10.500V13L10.500 16.500L5 13.500Z" fill="#fff" stroke="#1c4f7c" stroke-width="1.1" stroke-linejoin="round" stroke-linecap="round" /><path d="M5 10.500L10.500 13.500L16 10.500M10.500 13.500V16.500" fill="none" stroke="#1c4f7c" stroke-width="0.9" stroke-linejoin="round" stroke-linecap="round" /><path d="M15.500 7.500V3" fill="none" stroke="#e8474c" stroke-width="1.1" stroke-linejoin="round" stroke-linecap="round" /><path d="M14 4L15.500 1.500L17 4Z" fill="#e8474c"/></svg>
<svg style="left:1546px;top:988px;" width="18" height="18" viewBox="0 0 18 18"><path d="M2 2V16" fill="none" stroke="#1c4f7c" stroke-width="1.3" stroke-linejoin="round" stroke-linecap="round" /><path d="M5 4.500L9 2.500L14.500 5V8L10.500 10L5 7.500Z" fill="#8fd9d8" stroke="#1c4f7c" stroke-width="1.0" stroke-linejoin="round" stroke-linecap="round" /><path d="M5 4.500L10.500 7L14.500 5M10.500 7V10" fill="none" stroke="#1c4f7c" stroke-width="0.8" stroke-linejoin="round" stroke-linecap="round" /><path d="M5.500 10.500L8.500 9L10.500 10L14.500 8L17 9.500V12.500L11.500 15.500L5.500 13Z" fill="#dff4f5" stroke="#1c4f7c" stroke-width="1.0" stroke-linejoin="round" stroke-linecap="round" /><path d="M5.500 10.500L11.500 13L17 9.500M11.500 13V15.500" fill="none" stroke="#1c4f7c" stroke-width="0.8" stroke-linejoin="round" stroke-linecap="round" /></svg>
<svg style="left:1580px;top:988px;" width="18" height="18" viewBox="0 0 18 18"><path d="M2 11.500L12.500 1.500L16.500 5.500L6 15.500Z" fill="#dff4f5" stroke="#1c4f7c" stroke-width="1.3" stroke-linejoin="round" stroke-linecap="round" /><path d="M5 10.500l1.500 1.500M7 8.500l1.500 1.500M9 6.500l1.500 1.500M11 4.500l1.500 1.500" fill="none" stroke="#35b0b8" stroke-width="1.0" stroke-linejoin="round" stroke-linecap="round" /></svg>
<svg style="left:1614px;top:988px;" width="18" height="18" viewBox="0 0 18 18"><path d="M3 8.500L13 3.500C15 2.500 17 5 15 6.500L6 11.500C4 12.500 2 10 3 8.500Z" fill="#dff4f5" stroke="#1c4f7c" stroke-width="1.1" stroke-linejoin="round" stroke-linecap="round" /><path d="M3 8.500C4.500 7.500 6.500 9.500 6 11.500" fill="none" stroke="#1c4f7c" stroke-width="0.9" stroke-linejoin="round" stroke-linecap="round" /><path d="M2 14h4M4 12v4" fill="none" stroke="#35b0b8" stroke-width="1.2" stroke-linejoin="round" stroke-linecap="round" /><text x="12.300" y="16.800" text-anchor="middle" font-family="Liberation Sans,sans-serif" font-weight="bold" font-size="6.500" fill="#143a5a">TEP</text></svg>
<div class="sep" style="left:1112px;top:989px;height:16px;background:#d0d0d0"></div>
<div class="sep" style="left:1276px;top:989px;height:16px;background:#d0d0d0"></div>
<div class="sep" style="left:1400px;top:989px;height:16px;background:#d0d0d0"></div>
<div class="sep" style="left:1487px;top:989px;height:16px;background:#d0d0d0"></div>
<div class="sep" style="left:1573px;top:989px;height:16px;background:#d0d0d0"></div>
<div class="sep" style="left:1607px;top:989px;height:16px;background:#d0d0d0"></div>
<div class="a" style="left:0px;top:1012px;width:1920px;height:1px;background:#cfcfcf"></div>
<div class="a" style="left:0px;top:1013px;width:1920px;height:24px;background:#efefef"></div>
<svg style="left:7px;top:1017px;" width="18" height="18" viewBox="0 0 18 18"><path d="M1.6 2.5H8.5L9.5 4.5H16.4V16.4H1.6Z" fill="#dff4f5" stroke="#1c4f7c" stroke-width="1.3" stroke-linejoin="round" stroke-linecap="round" /><path d="M11 2.6h4.5" fill="none" stroke="#35b0b8" stroke-width="1.4" stroke-linejoin="round" stroke-linecap="round" /></svg>
<svg style="left:33px;top:1017px;" width="18" height="18" viewBox="0 0 18 18"><path d="M4 1.6H1.6V4.5M14 1.6H16.4V4.5M4 16.4H1.6V13.5M14 16.400H16.400V13.500" fill="none" stroke="#1c4f7c" stroke-width="1.2" stroke-linejoin="round" stroke-linecap="round" /><rect x="4.6" y="3.2" width="3.3" height="11.6" fill="#dff4f5" stroke="#1c4f7c" stroke-width="1.1"/><rect x="10.1" y="3.2" width="3.3" height="11.6" fill="#dff4f5" stroke="#1c4f7c" stroke-width="1.1"/></svg>
<svg style="left:59px;top:1017px;" width="18" height="18" viewBox="0 0 18 18"><path d="M16.4 9V1.6H1.6V14.4H9" fill="#fff" stroke="#1c4f7c" stroke-width="1.3" stroke-linejoin="round" stroke-linecap="round" /><rect x="2.2" y="2.2" width="13.600" height="2.800" fill="#dff4f5"/><path d="M1.6 5.2H16.4" fill="none" stroke="#1c4f7c" stroke-width="1.0" stroke-linejoin="round" stroke-linecap="round" /><path d="M3.5 3.400h1.200M6 3.400h1.200" fill="none" stroke="#1c4f7c" stroke-width="1.0" stroke-linejoin="round" stroke-linecap="round" /><path d="M13.500 10.500v6M10.500 13.500h6" fill="none" stroke="#35b0b8" stroke-width="1.3" stroke-linejoin="round" stroke-linecap="round" /></svg>
<svg style="left:92px;top:1017px;" width="18" height="18" viewBox="0 0 18 18"><circle cx="9" cy="9" r="5" fill="#dff4f5"/><path d="M4.5 1.6H1.6V4.5M13.5 1.600H16.400V4.500M4.500 16.400H1.600V13.500M13.500 16.400H16.400V13.500" fill="none" stroke="#1c4f7c" stroke-width="1.2" stroke-linejoin="round" stroke-linecap="round" /><path d="M9 4.200V13.800M4.200 9H13.800" fill="none" stroke="#1c4f7c" stroke-width="2.2" stroke-linejoin="round" stroke-linecap="round" /></svg>
<svg style="left:119px;top:1017px;" width="18" height="18" viewBox="0 0 18 18"><path d="M5.5 10V4.200a1.100 1.100 0 0 1 2.200 0V8.500 2.900a1.100 1.100 0 0 1 2.200 0V8.500 3.600a1.100 1.100 0 0 1 2.200 0V9 5.600a1.050 1.050 0 0 1 2.100 0V12c0 3-1.700 4.600-4.200 4.600H8.700c-1.500 0-2.400-.6-3.300-1.800L2.300 10.700c-.8-1.200.7-2.300 1.700-1.300Z" fill="#fff" stroke="#1c4f7c" stroke-width="1.2" stroke-linejoin="round" stroke-linecap="round" /></svg>
<svg style="left:144px;top:1017px;" width="18" height="18" viewBox="0 0 18 18"><path d="M9 2C12 4 12 14 9 16C6 14 6 4 9 2Z" fill="none" stroke="#1c4f7c" stroke-width="1.1" stroke-linejoin="round" stroke-linecap="round" /><path d="M2 9C4 6 14 6 16 9C14 12 4 12 2 9Z" fill="none" stroke="#1c4f7c" stroke-width="1.1" stroke-linejoin="round" stroke-linecap="round" /><path d="M10.500 6.400l2.600 1.200-2.400 1.600Z" fill="#1c4f7c"/><path d="M9.800 11.200l-1 2.600 2.600-.4Z" fill="#1c4f7c"/></svg>
<svg style="left:170px;top:1017px;" width="18" height="18" viewBox="0 0 18 18"><circle cx="7.500" cy="7" r="5.200" fill="#fff" stroke="#1c4f7c" stroke-width="1.200"/><circle cx="7.500" cy="7" r="2.700" fill="#dff4f5" stroke="#35b0b8" stroke-width="1.200" stroke-dasharray="2.300 1.900"/><path d="M11.500 11L16.500 16" fill="none" stroke="#1c4f7c" stroke-width="1.4" stroke-linejoin="round" stroke-linecap="round" /></svg>
<svg style="left:203px;top:1017px;" width="18" height="18" viewBox="0 0 18 18"><path d="M2 5L9.0 1.5L16 5L9.0 8.5Z" fill="#fff" stroke="#1c4f7c" stroke-width="1.3" stroke-linejoin="round" stroke-linecap="round" /><path d="M2 5L9.0 8.5V16.5L2 13.0Z" fill="#fff" stroke="#1c4f7c" stroke-width="1.3" stroke-linejoin="round" stroke-linecap="round" /><path d="M9.0 8.5L16 5V13.0L9.0 16.5Z" fill="#fff" stroke="#1c4f7c" stroke-width="1.3" stroke-linejoin="round" stroke-linecap="round" /></svg>
<svg style="left:229px;top:1017px;" width="18" height="18" viewBox="0 0 18 18"><path d="M2 5L9 1.500L16 5V13L9 16.500L2 13Z" fill="#fff" stroke="#1c4f7c" stroke-width="1.2" stroke-linejoin="round" stroke-linecap="round" /><path d="M2 5L16 13M16 5L2 13M9 1.500V16.500" fill="none" stroke="#1c4f7c" stroke-width="1.0" stroke-linejoin="round" stroke-linecap="round" /></svg>
<div class="a" style="left:254px;top:1016px;width:20px;height:20px;background:#c3e0db;border:1px solid #3a9e8d"></div>
<svg style="left:255px;top:1017px;" width="18" height="18" viewBox="0 0 18 18"><path d="M2 5L9.0 1.5L16 5L9.0 8.5Z" fill="#fff" stroke="#1c4f7c" stroke-width="1.3" stroke-linejoin="round" stroke-linecap="round" /><path d="M2 5L9.0 8.5V16.5L2 13.0Z" fill="#a9bfc6" stroke="#1c4f7c" stroke-width="1.3" stroke-linejoin="round" stroke-linecap="round" /><path d="M9.0 8.5L16 5V13.0L9.0 16.5Z" fill="#dff4f5" stroke="#1c4f7c" stroke-width="1.3" stroke-linejoin="round" stroke-linecap="round" /></svg>
<svg style="left:281px;top:1017px;" width="18" height="18" viewBox="0 0 18 18"><path d="M2 5L9.0 1.5L16 5L9.0 8.5Z" fill="#fff" stroke="#2f75a8" stroke-width="1.1" stroke-linejoin="round" stroke-linecap="round" /><path d="M2 5L9.0 8.5V16.5L2 13.0Z" fill="#a9c3cc" stroke="#2f75a8" stroke-width="1.1" stroke-linejoin="round" stroke-linecap="round" /><path d="M9.0 8.5L16 5V13.0L9.0 16.5Z" fill="#dff4f5" stroke="#2f75a8" stroke-width="1.1" stroke-linejoin="round" stroke-linecap="round" /></svg>
<svg style="left:307px;top:1017px;" width="18" height="18" viewBox="0 0 18 18"><path d="M2 5L9.0 1.5L16 5L9.0 8.5Z" fill="#f2fcfc" stroke="none" stroke-width="0" stroke-linejoin="round" stroke-linecap="round" /><path d="M2 5L9.0 8.5V16.5L2 13.0Z" fill="#a9c9cc" stroke="none" stroke-width="0" stroke-linejoin="round" stroke-linecap="round" /><path d="M9.0 8.5L16 5V13.0L9.0 16.5Z" fill="#d4edef" stroke="none" stroke-width="0" stroke-linejoin="round" stroke-linecap="round" /></svg>
<div class="a" style="left:339px;top:1016px;width:20px;height:20px;background:#c3e0db;border:1px solid #3a9e8d"></div>
<svg style="left:340px;top:1017px;" width="18" height="18" viewBox="0 0 18 18"><path d="M2 3.500h8.500M2 8h5.500M2 12.500h2.500" fill="none" stroke="#1c4f7c" stroke-width="1.2" stroke-linejoin="round" stroke-linecap="round" /><path d="M13.500 1.500L6 16.500" fill="none" stroke="#35b0b8" stroke-width="1.3" stroke-linejoin="round" stroke-linecap="round" /><path d="M14.500 2.500H17V5H13.300ZM12.300 7H17V10H10.800ZM9.800 12H17V15.500H8Z" fill="#35b0b8"/></svg>
<svg style="left:370px;top:1020px;" width="10" height="12" viewBox="0 0 10 12"><path d="M1 5l4-3.5 4 3.5M1 10l4-3.5 4 3.5" stroke="#1f4e79" stroke-width="1.2" fill="none"/></svg>
<div class="sep" style="left:84px;top:1018px;height:16px;background:#cdcdcd"></div>
<div class="sep" style="left:195px;top:1018px;height:16px;background:#cdcdcd"></div>
<div class="sep" style="left:332px;top:1018px;height:16px;background:#cdcdcd"></div>
<div class="sep" style="left:391px;top:1018px;height:16px;background:#cdcdcd"></div>
<div class="a" style="left:404px;top:1025px;width:8px;height:2px;background:#a3a3a3"></div>
<div class="a" style="left:421px;top:1025px;width:61px;height:1px;background:#a5a5a5"></div>
<div class="a" style="left:449px;top:1018px;width:5px;height:14px;background:#e6e6e6;border:1px solid #a0a0a0"></div>
<svg style="left:492px;top:1022px;" width="8" height="8" viewBox="0 0 8 8"><path d="M0 4h8M4 0v8" stroke="#9a9a9a" stroke-width="2"/></svg>
<div class="t" style="left:951px;top:1017px;color:#444;letter-spacing:0.25px">-13460.56 , 27362.37 , 0.00</div>
<div class="a" style="left:1726px;top:1016px;width:20px;height:20px;background:#c3e0db;border:1px solid #3a9e8d"></div>
<svg style="left:1727px;top:1017px;" width="18" height="18" viewBox="0 0 18 18"><path d="M5.500 5.500H15.500V15.500H5.500Z" fill="none" stroke="#1c4f7c" stroke-width="1.5" stroke-linejoin="round" stroke-linecap="round" /><rect x="2.500" y="2.500" width="5" height="5" fill="#fff" stroke="#35b0b8" stroke-width="1.100"/></svg>
<div class="a" style="left:1762px;top:1016px;width:20px;height:20px;background:#c3e0db;border:1px solid #3a9e8d"></div>
<svg style="left:1763px;top:1017px;" width="18" height="18" viewBox="0 0 18 18"><path d="M2 15.500H16" fill="none" stroke="#1c4f7c" stroke-width="1.4" stroke-linejoin="round" stroke-linecap="round" /><path d="M2 15.500L10 7.500" fill="none" stroke="#1c4f7c" stroke-width="1.3" stroke-linejoin="round" stroke-linecap="round" /><path d="M12 5.500L16 1.500" fill="none" stroke="#1c4f7c" stroke-width="0.9" stroke-linejoin="round" stroke-linecap="round" stroke-dasharray="1.500 1.200"/><circle cx="9.500" cy="8" r="1.900" fill="#dff4f5" stroke="#1c4f7c" stroke-width="1.100"/></svg>
<div class="a" style="left:1788px;top:1016px;width:20px;height:20px;background:#c3e0db;border:1px solid #3a9e8d"></div>
<svg style="left:1789px;top:1017px;" width="18" height="18" viewBox="0 0 18 18"><path d="M4 1.500L8.500 14" fill="none" stroke="#1c4f7c" stroke-width="1.3" stroke-linejoin="round" stroke-linecap="round" /><path d="M10 15.500h2M14.500 15.500h1.500" fill="none" stroke="#1c4f7c" stroke-width="1.2" stroke-linejoin="round" stroke-linecap="round" /><path d="M8.500 15.500A4 4 0 0 0 6.500 10.500L8.500 14.500Z" fill="#fff" stroke="#1c4f7c" stroke-width="1.0" stroke-linejoin="round" stroke-linecap="round" /></svg>
<svg style="left:1813px;top:1017px;" width="18" height="18" viewBox="0 0 18 18"><path d="M3.500 1.500V15.500H16.500" fill="none" stroke="#1c4f7c" stroke-width="1.3" stroke-linejoin="round" stroke-linecap="round" /><rect x="3.500" y="10.500" width="5" height="5" fill="#fff" stroke="#35b0b8" stroke-width="1.200"/></svg>
<svg style="left:1841px;top:1017px;" width="18" height="18" viewBox="0 0 18 18"><rect x="1.800" y="1.800" width="14.400" height="14.400" fill="#fff" stroke="#1c4f7c" stroke-width="1.300"/><path d="M5.400 1.800V16.200M9 1.800V16.200M12.600 1.800V16.200M1.800 5.400H16.200M1.800 9H16.200M1.800 12.600H16.200" fill="none" stroke="#1c4f7c" stroke-width="1.2" stroke-linejoin="round" stroke-linecap="round" /></svg>
<svg style="left:1867px;top:1017px;" width="18" height="18" viewBox="0 0 18 18"><path d="M9 1.500L16 8.500L9 15.500L2 8.500Z" fill="none" stroke="#9cc7d6" stroke-width="0.9" stroke-linejoin="round" stroke-linecap="round" /><circle cx="9" cy="8" r="1.800" fill="#fff" stroke="#1c4f7c" stroke-width="1.200"/><path d="M3 8H6M12 8H15" fill="none" stroke="#1c4f7c" stroke-width="1.2" stroke-linejoin="round" stroke-linecap="round" /><path d="M1.500 5.500V10.500L5 8ZM16.500 5.500V10.500L13 8Z" fill="#1c4f7c" transform="rotate(0)"/><circle cx="9" cy="15.500" r="1.400" fill="#fff" stroke="#1c4f7c" stroke-width="1"/></svg>
<svg style="left:1892px;top:1017px;" width="18" height="18" viewBox="0 0 18 18"><path d="M16.76 8.24L16.76 9.76L14.36 10.63L13.94 11.64L15.03 13.95L13.95 15.03L11.64 13.94L10.63 14.36L9.76 16.76L8.24 16.76L7.37 14.36L6.36 13.94L4.05 15.03L2.97 13.95L4.06 11.64L3.64 10.63L1.24 9.76L1.24 8.24L3.64 7.37L4.06 6.36L2.97 4.05L4.05 2.97L6.36 4.06L7.37 3.64L8.24 1.24L9.76 1.24L10.63 3.64L11.64 4.06L13.95 2.97L15.03 4.05L13.94 6.36L14.36 7.37Z" fill="#dff4f5" stroke="#2f75a8" stroke-width="1.2" stroke-linejoin="round" stroke-linecap="round" /><circle cx="9" cy="9" r="2.800" fill="#efefef" stroke="#2f75a8" stroke-width="1.200"/></svg>
<svg style="left:1747px;top:1023px;" width="8" height="6" viewBox="0 0 8 6"><path d="M0.5 4.5l3.5-3.5 3.5 3.5" stroke="#444" stroke-width="1" fill="none"/></svg>
<div class="a" style="left:510px;top:275px;width:946px;height:533px;background:#fff;border:1px solid #6e6e6e;box-shadow:0 5px 20px 0 rgba(0,0,0,0.30),0 0 4px rgba(0,0,0,0.10)"></div>
<svg style="left:519px;top:282px;" width="16" height="16" viewBox="0 0 16 16"><rect x="0" y="0" width="16" height="16" rx="3" fill="url(#glogo)"/><circle cx="8" cy="9.800" r="2.900" fill="none" stroke="#fff" stroke-width="2.300"/><rect x="4" y="4.500" width="2.200" height="4.500" fill="#fff"/><circle cx="5" cy="3.300" r="0.800" fill="#fff"/><circle cx="12.300" cy="3" r="0.800" fill="#fff"/></svg>
<div class="t" style="left:540px;top:283px;color:#000">选择工程名</div>
<svg style="left:1435px;top:285px;" width="10" height="10" viewBox="0 0 10 10"><path d="M0.5 0.5l9 9M9.5 0.5l-9 9" stroke="#111" stroke-width="1.1" fill="none"/></svg>
<svg style="left:523px;top:320px;" width="14" height="14" viewBox="0 0 14 14"><path d="M13 7H2M7 2L2 7l5 5" stroke="#cfcfcf" stroke-width="1.5" fill="none"/></svg>
<svg style="left:552px;top:320px;" width="14" height="14" viewBox="0 0 14 14"><path d="M1 7h11M7 2l5 5-5 5" stroke="#cfcfcf" stroke-width="1.5" fill="none"/></svg>
<svg style="left:580px;top:324px;" width="7" height="5" viewBox="0 0 7 5"><path d="M0.5 0.5l3 3 3-3" stroke="#c9c9c9" stroke-width="1.1" fill="none"/></svg>
<svg style="left:597px;top:320px;" width="13" height="14" viewBox="0 0 13 14"><path d="M6.5 13V2M1.5 7l5-5 5 5" stroke="#6a6a6a" stroke-width="1.7" fill="none"/></svg>
<div class="a" style="left:617px;top:311px;width:612px;height:31px;background:#fff;border:1px solid #d9d9d9"></div>
<div class="a" style="left:1194px;top:312px;width:1px;height:29px;background:#d9d9d9"></div>
<svg style="left:622px;top:318px;" width="13" height="16" viewBox="0 0 13 16"><path d="M0.500 1.500H11V15H0.500Z" fill="#ffe28a" stroke="#f0cd64" stroke-width="0.700"/><path d="M10.300 9.500H12.500V15H10.300Z" fill="#fff0b8" stroke="#e9c45c" stroke-width="0.600"/></svg>
<div class="t" style="left:659px;top:319px;color:#000">此电脑</div>
<div class="t" style="left:720px;top:319px;color:#000">本地磁盘 (D:)</div>
<div class="t" style="left:817px;top:319px;color:#000">全功能版项目</div>
<div class="t" style="left:914px;top:319px;color:#000">案例</div>
<svg style="left:643.5px;top:323px;" width="5" height="8" viewBox="0 0 5 8"><path d="M1 0.8l3 3.2-3 3.2" stroke="#555" stroke-width="1.1" fill="none"/></svg>
<svg style="left:704.5px;top:323px;" width="5" height="8" viewBox="0 0 5 8"><path d="M1 0.8l3 3.2-3 3.2" stroke="#555" stroke-width="1.1" fill="none"/></svg>
<svg style="left:801.5px;top:323px;" width="5" height="8" viewBox="0 0 5 8"><path d="M1 0.8l3 3.2-3 3.2" stroke="#555" stroke-width="1.1" fill="none"/></svg>
<svg style="left:898.5px;top:323px;" width="5" height="8" viewBox="0 0 5 8"><path d="M1 0.8l3 3.2-3 3.2" stroke="#555" stroke-width="1.1" fill="none"/></svg>
<svg style="left:1173.5px;top:324px;" width="9" height="6" viewBox="0 0 9 6"><path d="M0.7 0.7l3.8 3.8 3.8-3.8" stroke="#6a6a6a" stroke-width="1.8" fill="none"/></svg>
<svg style="left:1206px;top:320px;" width="12" height="13" viewBox="0 0 12 13"><path d="M8.92 3.15A4.7 4.7 0 1 1 3.55 2.68" stroke="#6a6a6a" stroke-width="1.3" fill="none"/><path d="M2.3 1.25H6.8V5.4" stroke="#6a6a6a" stroke-width="1.3" fill="none"/></svg>
<div class="a" style="left:1241px;top:311px;width:202px;height:31px;background:#fff;border:1px solid #d9d9d9"></div>
<svg style="left:1255px;top:320px;" width="14" height="13" viewBox="0 0 14 13"><circle cx="8.5" cy="4.5" r="3.6" stroke="#777" stroke-width="1" fill="none"/><path d="M6 7.2L1 12.5" stroke="#777" stroke-width="1.1"/></svg>
<div class="t" style="left:1282px;top:319px;color:#6d6d6d">在 案例 中搜索</div>
<div class="a" style="left:511px;top:349px;width:944px;height:31px;background:#f5f6f7"></div>
<div class="a" style="left:511px;top:380px;width:944px;height:1px;background:#e8e9ea"></div>
<div class="t" style="left:529px;top:357px;color:#1e1e1e">组织</div>
<svg style="left:558px;top:362px;" width="8" height="5" viewBox="0 0 8 5"><path d="M0 0h8l-4 4.5z" fill="#1e2f4a"/></svg>
<div class="t" style="left:596px;top:357px;color:#1e1e1e">新建文件夹</div>
<svg style="left:1332px;top:356px;" width="18" height="14" viewBox="0 0 18 14"><rect x="0.5" y="0.5" width="3.5" height="13" fill="#fff" stroke="#9a9a9a" stroke-width="0.8"/><rect x="1.7" y="2.2" width="1.2" height="1.2" fill="#6b8bd0"/><rect x="1.7" y="6.4" width="1.2" height="1.2" fill="#6b8bd0"/><rect x="1.7" y="10.6" width="1.2" height="1.2" fill="#d04040"/><path d="M6 2.8h3.5M11 2.8h3.5M6 7h3.5M11 7h3.5M6 11.2h3.5M11 11.2h3.5" stroke="#8a8a8a" stroke-width="1"/></svg>
<svg style="left:1358px;top:362px;" width="8" height="5" viewBox="0 0 8 5"><path d="M0 0h8l-4 4.5z" fill="#1e2f4a"/></svg>
<svg style="left:1388px;top:358px;" width="16" height="13" viewBox="0 0 16 13"><rect x="0.5" y="0.5" width="15" height="11.5" fill="#fff" stroke="#7a7a7a" stroke-width="1"/><rect x="9.5" y="1.5" width="5.5" height="10" fill="#3f93e0"/><path d="M4.5 1v11" stroke="#7a7a7a" stroke-width="1"/></svg>
<svg style="left:1423px;top:355px;" width="17" height="17" viewBox="0 0 17 17"><circle cx="8.5" cy="8.5" r="8" fill="#0a5fb4"/><text x="8.5" y="13" text-anchor="middle" font-family="Liberation Sans,sans-serif" font-weight="bold" font-size="12" fill="#fff">?</text></svg>
<div class="a" style="left:511px;top:629px;width:139px;height:24px;background:#d9d9d9"></div>
<svg style="left:535px;top:392px;" width="16" height="16" viewBox="0 0 16 16"><rect x="0.5" y="2.3" width="15" height="9.700" fill="url(#gpc)" stroke="#9fd4f5" stroke-width="0.6"/><path d="M7 12v2.300h2V12" fill="#8aa0b4"/><path d="M1 15.300h14" stroke="#8a9fb5" stroke-width="1.100"/><path d="M4.500 14.300h7" stroke="#b5c4d2" stroke-width="0.8"/></svg>
<div class="t" style="left:556px;top:393px;color:#000">此电脑</div>
<svg style="left:542px;top:416px;" width="16" height="16" viewBox="0 0 16 16"><path d="M1 4L8.500 1.500L16 4L8.500 6.500Z" fill="#5fd6e6"/><path d="M1 4L8.500 6.500V16L1 13Z" fill="#a9ecf0"/><path d="M8.500 6.500L16 4V13L8.500 16Z" fill="#199fc3"/><path d="M1 13L8.500 10.500L16 13L8.500 16Z" fill="#0f7f9f" opacity="0.55"/></svg>
<div class="t" style="left:564px;top:417px;color:#000">3D 对象</div>
<svg style="left:542px;top:440px;" width="16" height="16" viewBox="0 0 16 16"><ellipse cx="8" cy="8.500" rx="7.500" ry="4.800" fill="#a9bccb"/><path d="M1.500 9C4 4.500 9 4 11.500 6.500C9 5.500 6 6.500 5.500 9.500C7 7.500 10 7.500 12 9.500C10 13 4 13 1.500 9Z" fill="#dfe8ef"/><path d="M5 10C7 8 10.500 8.500 11.500 10C10 12 6.500 12 5 10Z" fill="#6f8aa3"/><path d="M9 5.500C12 5 14.500 6.500 15 8.500C13.500 7 11 6.500 9 5.500Z" fill="#f5f9fb"/></svg>
<div class="t" style="left:564px;top:441px;color:#000;letter-spacing:0.4px">A360 Drive</div>
<svg style="left:542px;top:464px;" width="16" height="16" viewBox="0 0 16 16"><rect x="2" y="1" width="13" height="14.500" fill="#4a4a4a"/><rect x="4.300" y="1.800" width="8.400" height="6" fill="#3b62c9"/><rect x="4.300" y="8.600" width="8.400" height="6.200" fill="#3f78d0"/><path d="M5 6.500l2-3 2 2.500 1.500-1.500 2 2.500Z" fill="#e2a52b"/><circle cx="9.500" cy="4" r="1.100" fill="#d94f2b"/><path d="M4.300 13.500l3-2.500 2.500 1.500 3-1.500v3.800H4.300Z" fill="#6fa83a"/><rect x="2.600" y="1.8" width="1.100" height="1.300" fill="#eee"/><rect x="13.300" y="1.8" width="1.100" height="1.300" fill="#eee"/><rect x="2.600" y="4.2" width="1.100" height="1.300" fill="#eee"/><rect x="13.300" y="4.2" width="1.100" height="1.300" fill="#eee"/><rect x="2.600" y="6.6" width="1.100" height="1.300" fill="#eee"/><rect x="13.300" y="6.6" width="1.100" height="1.300" fill="#eee"/><rect x="2.600" y="9" width="1.100" height="1.300" fill="#eee"/><rect x="13.300" y="9" width="1.100" height="1.300" fill="#eee"/><rect x="2.600" y="11.4" width="1.100" height="1.300" fill="#eee"/><rect x="13.300" y="11.4" width="1.100" height="1.300" fill="#eee"/><rect x="2.600" y="13.6" width="1.100" height="1.300" fill="#eee"/><rect x="13.300" y="13.6" width="1.100" height="1.300" fill="#eee"/></svg>
<div class="t" style="left:564px;top:465px;color:#000">视频</div>
<svg style="left:542px;top:488px;" width="16" height="16" viewBox="0 0 16 16"><rect x="0.800" y="2.500" width="15.400" height="11.500" fill="#fff" stroke="#a9a9a9" stroke-width="1"/><rect x="2.300" y="4" width="12.400" height="8.500" fill="url(#gsky)"/><path d="M2.300 10.500C5 8 8 8.500 10 10C12 9 13.500 9.500 14.700 10.200V12.500H2.300Z" fill="#5f8f73"/><path d="M2.300 11.500C6 10.500 11 11 14.700 11.800V12.500H2.300Z" fill="#3f6f8f"/></svg>
<div class="t" style="left:564px;top:489px;color:#000">图片</div>
<svg style="left:542px;top:512px;" width="16" height="16" viewBox="0 0 16 16"><path d="M3 0.800H10.500L14 4.300V15.500H3Z" fill="#fff" stroke="#8f8f8f" stroke-width="0.9"/><path d="M10.500 0.800V4.300H14" fill="#e9e9e9" stroke="#8f8f8f" stroke-width="0.8"/><path d="M5 3.500h3.500M5 5.500h3" stroke="#2f6fd0" stroke-width="0.9"/><path d="M4.800 7.800h7.400M4.800 9.800h7.400" stroke="#2f6fd0" stroke-width="0.9"/><path d="M4.800 11.800h3M9 11.800h3.200M4.800 13.500h3" stroke="#7a7a7a" stroke-width="0.8"/><rect x="9" y="12.600" width="3.200" height="1.500" fill="#4f8f5f"/></svg>
<div class="t" style="left:564px;top:513px;color:#000">文档</div>
<svg style="left:542px;top:536px;" width="16" height="16" viewBox="0 0 16 16"><path d="M5.700 1H10.300V8H15.500L8 16L0.500 8H5.700Z" fill="#2f8be6"/><path d="M5.700 1H10.300V3H5.700Z" fill="#5aa7ef"/></svg>
<div class="t" style="left:564px;top:537px;color:#000">下载</div>
<svg style="left:542px;top:560px;" width="16" height="16" viewBox="0 0 16 16"><path d="M6.500 1.500C8 1.500 9 4 11.500 5.500C13.500 7 13.500 9.500 12 11.500C12.500 9 11 7.500 8.200 6.500V13a3 2.600 0 1 1-1.700-2.300Z" fill="#2d9df2"/></svg>
<div class="t" style="left:564px;top:561px;color:#000">音乐</div>
<svg style="left:542px;top:584px;" width="16" height="16" viewBox="0 0 16 16"><rect x="0.800" y="2.500" width="15.400" height="12" rx="0.800" fill="#1f8ff2"/><path d="M1.200 13.200H15.800" stroke="#8fd0ff" stroke-width="0.500"/><rect x="2" y="13.400" width="1.200" height="0.800" fill="#fff"/><rect x="12.500" y="13.400" width="1" height="0.800" fill="#fff"/><rect x="14" y="13.400" width="1" height="0.800" fill="#fff"/></svg>
<div class="t" style="left:564px;top:585px;color:#000">桌面</div>
<svg style="left:542px;top:608px;" width="16" height="16" viewBox="0 0 16 16"><path d="M4 8.700H14.500L16 11.200H2.500Z" fill="url(#gdrv)"/><rect x="2.500" y="11.200" width="13.500" height="4.300" rx="0.600" fill="#3d3d3d"/><path d="M2.500 11.200H16" stroke="#8a8a8a" stroke-width="0.600"/><rect x="12.200" y="12.800" width="1.500" height="1.300" fill="#3fe05a"/><rect x="1" y="4" width="2.300" height="2.300" fill="#1fa4f0"/><rect x="3.800" y="4" width="2.300" height="2.300" fill="#1fa4f0"/><rect x="1" y="6.800" width="2.300" height="2.300" fill="#1fa4f0"/><rect x="3.800" y="6.800" width="2.300" height="2.300" fill="#1fa4f0"/></svg>
<div class="t" style="left:564px;top:609px;color:#000">本地磁盘 (C:)</div>
<svg style="left:542px;top:632px;" width="16" height="16" viewBox="0 0 16 16"><path d="M4 8.700H14.500L16 11.200H2.500Z" fill="url(#gdrv)"/><rect x="2.500" y="11.200" width="13.500" height="4.300" rx="0.600" fill="#3d3d3d"/><path d="M2.500 11.200H16" stroke="#8a8a8a" stroke-width="0.600"/><rect x="12.200" y="12.800" width="1.500" height="1.300" fill="#3fe05a"/></svg>
<div class="t" style="left:564px;top:633px;color:#000">本地磁盘 (D:)</div>
<svg style="left:542px;top:656px;" width="16" height="16" viewBox="0 0 16 16"><path d="M4 8.700H14.500L16 11.200H2.500Z" fill="url(#gdrv)"/><rect x="2.500" y="11.200" width="13.500" height="4.300" rx="0.600" fill="#3d3d3d"/><path d="M2.500 11.200H16" stroke="#8a8a8a" stroke-width="0.600"/><rect x="12.200" y="12.800" width="1.500" height="1.300" fill="#3fe05a"/></svg>
<div class="t" style="left:564px;top:657px;color:#000">本地磁盘 (E:)</div>
<svg style="left:542px;top:680px;" width="16" height="16" viewBox="0 0 16 16"><path d="M4 8.700H14.500L16 11.200H2.500Z" fill="url(#gdrv)"/><rect x="2.500" y="11.200" width="13.500" height="4.300" rx="0.600" fill="#3d3d3d"/><path d="M2.500 11.200H16" stroke="#8a8a8a" stroke-width="0.600"/><rect x="12.200" y="12.800" width="1.500" height="1.300" fill="#3fe05a"/></svg>
<div class="t" style="left:564px;top:681px;color:#000">本地磁盘 (F:)</div>
<svg style="left:535px;top:712px;" width="16" height="16" viewBox="0 0 16 16"><circle cx="10.500" cy="6.500" r="5.500" fill="url(#gglobe)"/><path d="M7 3C9 4 9.500 6 8.500 8C10.500 8 12 9.500 12 11.500" fill="none" stroke="#e9f5fc" stroke-width="1.400" opacity="0.8"/><rect x="0.500" y="7.500" width="11" height="7.500" rx="0.800" fill="#3a9cf0" stroke="#1f6fc0" stroke-width="0.800"/><path d="M0.900 13.500H11.100" stroke="#9fd4ff" stroke-width="0.600"/></svg>
<div class="t" style="left:556px;top:713px;color:#000">网络</div>
<div class="a" style="left:651px;top:381px;width:16px;height:346px;background:#f0f0f0"></div>
<div class="a" style="left:651px;top:530px;width:16px;height:171px;background:#cdcdcd"></div>
<svg style="left:654.5px;top:387px;" width="9" height="6" viewBox="0 0 9 6"><path d="M0.8 5.2l3.7-3.7 3.7 3.7" stroke="#555" stroke-width="1.6" fill="none"/></svg>
<svg style="left:654.5px;top:715px;" width="9" height="6" viewBox="0 0 9 6"><path d="M0.8 0.8l3.7 3.7 3.7-3.7" stroke="#555" stroke-width="1.6" fill="none"/></svg>
<div class="a" style="left:668px;top:381px;width:1px;height:346px;background:#f0f0f0"></div>
<div class="a" style="left:942px;top:381px;width:1px;height:27px;background:#e5e5e5"></div>
<div class="a" style="left:1086px;top:381px;width:1px;height:27px;background:#e5e5e5"></div>
<div class="a" style="left:1206px;top:381px;width:1px;height:27px;background:#e5e5e5"></div>
<div class="a" style="left:1286px;top:381px;width:1px;height:27px;background:#e5e5e5"></div>
<svg style="left:808px;top:381px;" width="8" height="5" viewBox="0 0 8 5"><path d="M0.5 4.2l3.5-3.4 3.5 3.4" stroke="#6a6a6a" stroke-width="0.9" fill="none"/></svg>
<div class="t" style="left:688px;top:387px;color:#4c607a">名称</div>
<div class="t" style="left:949px;top:387px;color:#4c607a">修改日期</div>
<div class="t" style="left:1093px;top:387px;color:#4c607a">类型</div>
<div class="t" style="left:1213px;top:387px;color:#4c607a">大小</div>
<svg style="left:691px;top:416px;" width="12" height="15" viewBox="0 0 12 15"><path d="M0.5 0.5h7.5l3.5 3.5v10.5h-11z" fill="#fff" stroke="#8f8f8f" stroke-width="1"/><path d="M8 0.5v3.5h3.5" fill="none" stroke="#8f8f8f" stroke-width="1"/></svg>
<div class="t" style="left:709px;top:417px;color:#000">PM.JWS</div>
<div class="t" style="left:949px;top:417px;color:#6d6d6d;letter-spacing:0.5px">2023/8/22 10:46</div>
<div class="t" style="left:1093px;top:417px;color:#6d6d6d">JWS 文件</div>
<div class="t" style="left:1179px;top:417px;width:100px;color:#6d6d6d;text-align:right;letter-spacing:0.3px">117 KB</div>
<svg style="left:691px;top:437px;" width="12" height="15" viewBox="0 0 12 15"><path d="M0.5 0.5h7.5l3.5 3.5v10.5h-11z" fill="#fff" stroke="#8f8f8f" stroke-width="1"/><path d="M8 0.5v3.5h3.5" fill="none" stroke="#8f8f8f" stroke-width="1"/></svg>
<div class="t" style="left:709px;top:438px;color:#000">框架结构.JWS</div>
<div class="t" style="left:949px;top:438px;color:#6d6d6d;letter-spacing:0.5px">2023/8/22 10:46</div>
<div class="t" style="left:1093px;top:438px;color:#6d6d6d">JWS 文件</div>
<div class="t" style="left:1179px;top:438px;width:100px;color:#6d6d6d;text-align:right;letter-spacing:0.3px">2,096 KB</div>
<div class="a" style="left:511px;top:727px;width:944px;height:80px;background:#f0f0f0"></div>
<div class="t" style="left:641px;top:743px;color:#000">文件名(N):</div>
<div class="a" style="left:703px;top:738px;width:535px;height:26px;background:#fff;border:1px solid #0078d7"></div>
<div class="a" style="left:708px;top:743px;width:1px;height:16px;background:#000"></div>
<svg style="left:1224px;top:748px;" width="9" height="6" viewBox="0 0 9 6"><path d="M0.7 0.7l3.8 3.8 3.8-3.8" stroke="#444" stroke-width="1.1" fill="none"/></svg>
<div class="a" style="left:1250px;top:738px;width:188px;height:25px;background:#e1e1e1;border:1px solid #adadad"></div>
<div class="t" style="left:1254px;top:743px;color:#000">PKPM 数据文件(*.JWS)</div>
<svg style="left:1424px;top:748px;" width="9" height="6" viewBox="0 0 9 6"><path d="M0.7 0.7l3.8 3.8 3.8-3.8" stroke="#444" stroke-width="1.1" fill="none"/></svg>
<div class="a" style="left:1251px;top:770px;width:86px;height:24px;background:#e1e1e1;border:2px solid #0078d7"></div>
<div class="t" style="left:1251px;top:774px;width:86px;text-align:center;color:#000">打开(O)</div>
<div class="a" style="left:1351px;top:770px;width:86px;height:24px;background:#e1e1e1;border:1px solid #adadad"></div>
<div class="t" style="left:1351px;top:774px;width:86px;text-align:center;color:#000">取消</div>
<svg style="left:1444px;top:796px;" width="10" height="10" viewBox="0 0 10 10"><rect x="8" y="0" width="1.3" height="1.3" fill="#b0b0b0"/><rect x="5" y="3" width="1.3" height="1.3" fill="#b0b0b0"/><rect x="8" y="3" width="1.3" height="1.3" fill="#b0b0b0"/><rect x="2" y="6" width="1.3" height="1.3" fill="#b0b0b0"/><rect x="5" y="6" width="1.3" height="1.3" fill="#b0b0b0"/><rect x="8" y="6" width="1.3" height="1.3" fill="#b0b0b0"/><rect x="2" y="9" width="1.3" height="1.3" fill="#b0b0b0"/><rect x="5" y="9" width="1.3" height="1.3" fill="#b0b0b0"/><rect x="8" y="9" width="1.3" height="1.3" fill="#b0b0b0"/></svg>
</body></html>
